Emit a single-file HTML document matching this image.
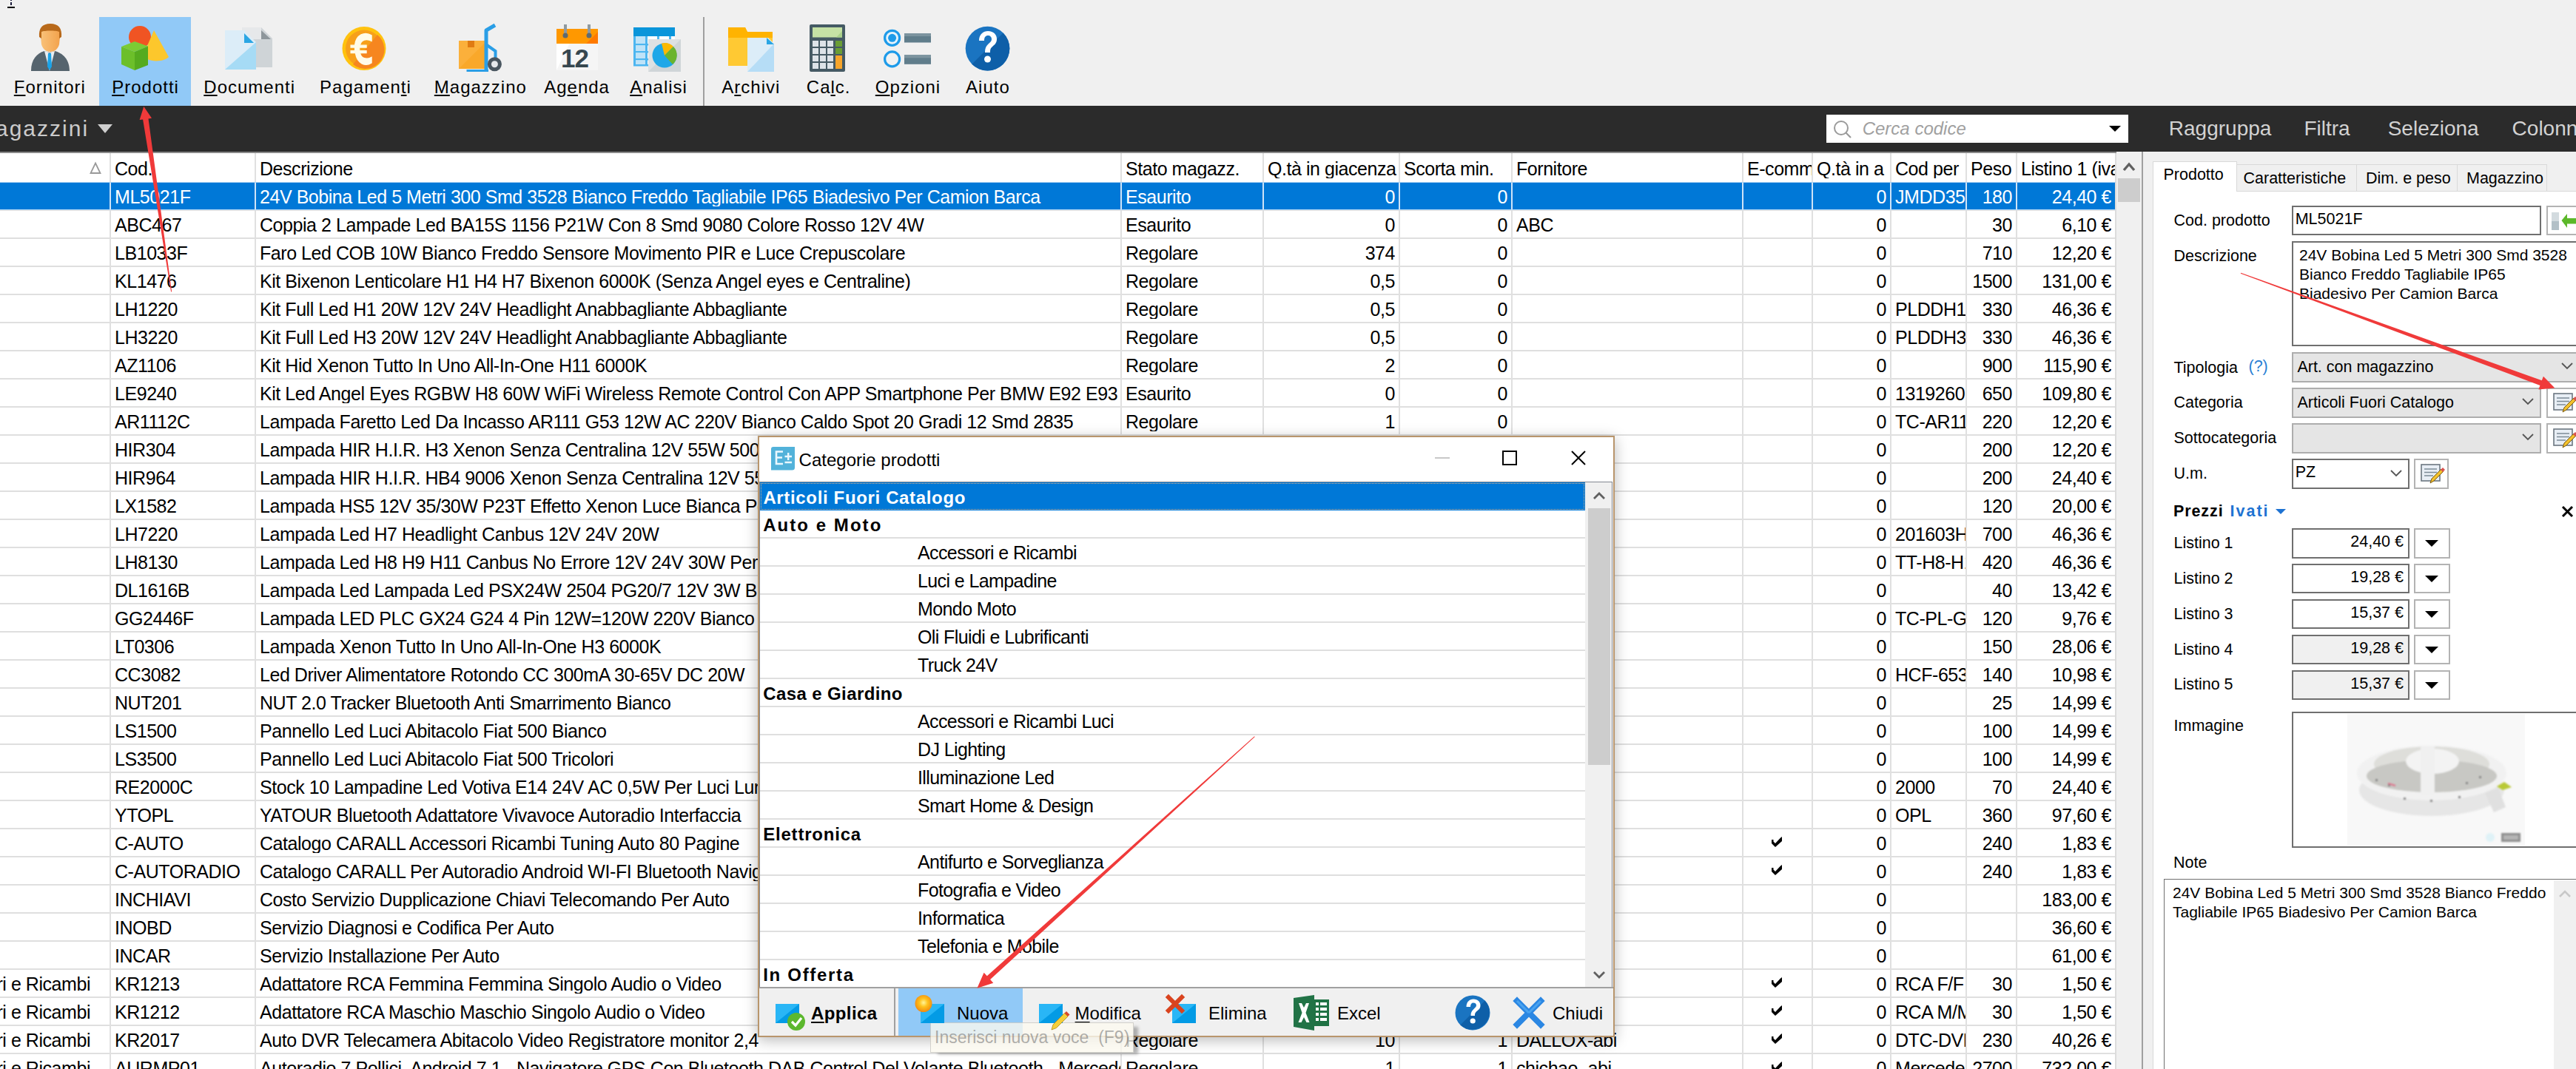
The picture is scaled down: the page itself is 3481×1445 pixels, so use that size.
<!DOCTYPE html><html><head><meta charset="utf-8"><title>Prodotti</title><style>
html,body{margin:0;padding:0;}
body{width:3481px;height:1445px;overflow:hidden;position:relative;background:#f0f0f0;font-family:"Liberation Sans",sans-serif;}
.t{position:absolute;white-space:pre;}
.r{position:absolute;}
svg{position:absolute;}
</style></head><body>
<div class="r" style="left:0px;top:0px;width:3481px;height:143px;background:#f0f0f0;"></div>
<div class="r" style="left:134px;top:23px;width:124px;height:120px;background:#91c9f7;"></div>
<div class="r" style="left:950px;top:23px;width:2px;height:120px;background:#a0a0a0;"></div>
<div class="t " style="left:18.8px;top:105.98px;font-size:24px;line-height:24px;color:#000;letter-spacing:1px;text-underline-offset:2px;text-decoration-thickness:2px;" ><u>F</u>ornitori</div>
<div class="t " style="left:151.20000000000002px;top:105.98px;font-size:24px;line-height:24px;color:#000;letter-spacing:1px;text-underline-offset:2px;text-decoration-thickness:2px;" ><u>P</u>rodotti</div>
<div class="t " style="left:275.3px;top:105.98px;font-size:24px;line-height:24px;color:#000;letter-spacing:1px;text-underline-offset:2px;text-decoration-thickness:2px;" ><u>D</u>ocumenti</div>
<div class="t " style="left:432.1px;top:105.98px;font-size:24px;line-height:24px;color:#000;letter-spacing:1px;text-underline-offset:2px;text-decoration-thickness:2px;" >Pagamen<u>t</u>i</div>
<div class="t " style="left:586.8px;top:105.98px;font-size:24px;line-height:24px;color:#000;letter-spacing:1px;text-underline-offset:2px;text-decoration-thickness:2px;" ><u>M</u>agazzino</div>
<div class="t " style="left:735.1999999999999px;top:105.98px;font-size:24px;line-height:24px;color:#000;letter-spacing:1px;text-underline-offset:2px;text-decoration-thickness:2px;" >Ag<u>e</u>nda</div>
<div class="t " style="left:851.1999999999999px;top:105.98px;font-size:24px;line-height:24px;color:#000;letter-spacing:1px;text-underline-offset:2px;text-decoration-thickness:2px;" ><u>A</u>nalisi</div>
<div class="t " style="left:975.3px;top:105.98px;font-size:24px;line-height:24px;color:#000;letter-spacing:1px;text-underline-offset:2px;text-decoration-thickness:2px;" >A<u>r</u>chivi</div>
<div class="t " style="left:1089.8px;top:105.98px;font-size:24px;line-height:24px;color:#000;letter-spacing:1px;text-underline-offset:2px;text-decoration-thickness:2px;" >Ca<u>l</u>c.</div>
<div class="t " style="left:1182.8px;top:105.98px;font-size:24px;line-height:24px;color:#000;letter-spacing:1px;text-underline-offset:2px;text-decoration-thickness:2px;" ><u>O</u>pzioni</div>
<div class="t " style="left:1305.1px;top:105.98px;font-size:24px;line-height:24px;color:#000;letter-spacing:1px;" >Aiuto</div>
<div class="r" style="left:13.7px;top:0px;width:2.4px;height:1.2px;background:#1a1a3a;"></div>
<div class="r" style="left:13.7px;top:2.5px;width:2.4px;height:4.5px;background:#1a1a3a;"></div>
<div class="r" style="left:10px;top:9px;width:10px;height:2px;background:#000;"></div>
<svg style="left:0;top:0" width="1400" height="143" viewBox="0 0 1400 143">
<defs>
<linearGradient id="face" x1="0" x2="1"><stop offset="0" stop-color="#f9c27a"/><stop offset="1" stop-color="#f3a24c"/></linearGradient>
<radialGradient id="sun" cx="0.45" cy="0.4" r="0.6"><stop offset="0" stop-color="#fff3a0"/><stop offset="0.5" stop-color="#ffc21a"/><stop offset="1" stop-color="#f38a12"/></radialGradient>
</defs>
<!-- Fornitori person -->
<path d="M42,96 C42,80 50,72 60,69 L67,71 L74,69 C85,72 94,80 94,96 Z" fill="#56646e"/>
<path d="M60,69 L67,96 L74,69 L70,70 L67,72 L64,70 Z" fill="#e9eef2"/>
<path d="M65,72 L69,72 L70,90 L67,95 L64,90 Z" fill="#1aa3e8"/>
<path d="M55,50 C55,38 59,33 68,33 C77,33 81,38 81,50 L80,60 C78,67 73,70 68,70 C63,70 58,67 56,60 Z" fill="url(#face)"/>
<path d="M53,50 C52,38 57,32 68,32 C79,32 84,38 83,50 L80,52 L80,43 C76,41 60,41 56,43 L56,52 Z" fill="#b8691a"/>
<!-- Prodotti -->
<circle cx="189" cy="50" r="15" fill="#f05423"/>
<path d="M208,41 L228,77 C222,83 208,84 199,80 L199,62 Z" fill="#fcc72c"/>
<path d="M164,63 L182,56 L200,62.5 L182,70 Z" fill="#7ccb34"/>
<path d="M164,63 L182,70 L182,95 L164,87 Z" fill="#6cbf2a"/>
<path d="M182,70 L200,62.5 L200,88 L182,95 Z" fill="#55ab1f"/>
<!-- Documenti -->
<path d="M327,37 L353,37 L368,52 L368,91 L327,91 Z" fill="#cfd4d7"/>
<path d="M327,37 L353,37 L353,53 L327,53 Z" fill="#e6e8ea"/>
<path d="M353,41 L366,53 L353,53 Z" fill="#8e969b"/>
<path d="M304,41 L330,41 L346,57 L346,94 L304,94 Z" fill="#dcedf8"/>
<path d="M346,57 L346,94 L304,94 Z" fill="#a6dbf5"/>
<path d="M330,45 L343,58 L330,58 Z" fill="#2aa6e4"/>
<!-- Pagamenti coin -->
<circle cx="492" cy="65.5" r="29.5" fill="#ffc20e"/>
<circle cx="492" cy="65.5" r="25" fill="#f7a01a"/>
<path d="M510,47 A25,25 0 0 1 477,87 Z" fill="#f6861f"/>
<g transform="matrix(0.78,0,0,0.95,105.1,4.15)"><path d="M509,46 C497,40 482,45 480,60 L473,60 L473,63 L480,63 L480,68 L473,68 L473,71 L481,71 C484,86 498,91 509,85 L509,77 C500,81 491,79 489,71 L500,71 L500,68 L488,68 L488,63 L500,63 L500,60 L489,60 C491,52 500,50 509,54 Z" fill="#fffbe8" stroke="#fffbe8" stroke-width="1.5"/></g>
<!-- Magazzino -->
<rect x="620" y="55" width="35" height="38" fill="#fbb03b"/>
<path d="M620,93 L655,58 L655,93 Z" fill="#f9a82a"/>
<rect x="632" y="55" width="9" height="9" fill="#e07b12"/>
<path d="M657,96 L657,41 L669,34" fill="none" stroke="#2a9ee6" stroke-width="5" stroke-linejoin="round"/>
<path d="M630.5,95.5 L660,95.5" stroke="#2a9ee6" stroke-width="3"/>
<path d="M658,61 L669.5,69 L669.5,79" fill="none" stroke="#2a9ee6" stroke-width="4"/>
<circle cx="668.4" cy="86.8" r="9.5" fill="#4a5660"/>
<circle cx="668.4" cy="86.8" r="4.5" fill="#e6e8ec"/>
<!-- Agenda -->
<path d="M752,58 L808,58 L808,95 L752,95 Z" fill="#f5f5f5"/>
<path d="M752,95 L770,58 L752,58 Z" fill="#ffffff"/>
<rect x="752" y="39" width="56" height="20" fill="#ff9800"/>
<path d="M792,59 L808,43 L808,59 Z" fill="#ff7a00"/>
<rect x="762" y="33" width="4" height="17" fill="#8f9aa0"/><rect x="794" y="33" width="4" height="17" fill="#8f9aa0"/>
<circle cx="764" cy="48" r="3.5" fill="#5f6a70"/><circle cx="796" cy="48" r="3.5" fill="#5f6a70"/>
<text x="758" y="91" font-family="Liberation Sans" font-weight="bold" font-size="35" fill="#37474f" letter-spacing="-1">12</text>
<!-- Analisi -->
<rect x="856" y="37" width="56" height="12" fill="#0a95da"/>
<rect x="856" y="49" width="56" height="40" fill="#ffffff"/>
<g fill="#4db6f0"><rect x="856" y="49" width="3" height="40"/><rect x="872" y="49" width="3" height="40"/><rect x="888" y="49" width="3" height="6"/><rect x="904" y="49" width="3" height="6"/>
<rect x="856" y="59" width="20" height="2.5"/><rect x="856" y="69" width="20" height="2.5"/><rect x="856" y="79" width="20" height="2.5"/><rect x="856" y="87" width="20" height="2.5"/></g>
<g fill="#bfe3f8"><rect x="859" y="49" width="13" height="10"/><rect x="859" y="61.5" width="13" height="7.5"/><rect x="859" y="71.5" width="13" height="7.5"/><rect x="859" y="81.5" width="13" height="5.5"/></g>
<rect x="876" y="53" width="44" height="44" fill="#dde1e3"/>
<path d="M876,97 L920,53 L920,97 Z" fill="#cfd5d8"/>
<circle cx="898" cy="75" r="16.5" fill="#1ea7e8"/>
<path d="M898,75 L894,58.8 A16.5,16.5 0 0 1 910,63 Z" fill="#fbb900"/>
<path d="M898,75 L910,63 A16.5,16.5 0 0 1 909,87 Z" fill="#6ab42e"/>
<!-- Archivi -->
<path d="M984,37 L1007,37 L1010,43 L1044,43 L1044,89 L984,89 Z" fill="#ffc933"/>
<path d="M984,37 L1007,37 L1010,43 L1044,43 L1044,51 L984,51 Z" fill="#ffb300"/>
<path d="M1010,51 L1038,51 L1046,59 L1046,97 L1010,97 Z" fill="#dcedf8"/>
<path d="M1046,59 L1046,97 L1010,97 Z" fill="#b6ddf6"/>
<path d="M1036,51 L1046,60 L1036,60 Z" fill="#2aa6e4"/>
<!-- Calc -->
<rect x="1094" y="33" width="48" height="64" rx="2" fill="#455a64"/>
<rect x="1098" y="37" width="40" height="13.5" fill="#c5e1a5"/>
<path d="M1130,50.5 L1138,42 L1138,50.5 Z" fill="#a9d08a"/>
<g fill="#dde3e8"><rect x="1098" y="55" width="8" height="8"/><rect x="1108" y="55" width="8" height="8"/><rect x="1118" y="55" width="8" height="8"/>
<rect x="1098" y="65" width="8" height="8"/><rect x="1108" y="65" width="8" height="8"/><rect x="1118" y="65" width="8" height="8"/>
<rect x="1098" y="75" width="8" height="8"/><rect x="1108" y="75" width="8" height="8"/><rect x="1118" y="75" width="8" height="8"/>
<rect x="1098" y="85" width="8" height="8"/><rect x="1108" y="85" width="8" height="8"/><rect x="1118" y="85" width="8" height="8"/></g>
<rect x="1129" y="55" width="9" height="8" fill="#6a9e35"/><rect x="1129" y="65" width="9" height="8" fill="#6a9e35"/><rect x="1129" y="75" width="9" height="18" fill="#f7a52b"/>
<!-- Opzioni -->
<circle cx="1205.6" cy="51.3" r="10" fill="#e6f3fb" stroke="#1e9be9" stroke-width="3.2"/>
<circle cx="1205.6" cy="51.3" r="5.5" fill="#1e9be9"/>
<circle cx="1205.6" cy="79.9" r="10" fill="#f2f2f2" stroke="#1e9be9" stroke-width="3.2"/>
<rect x="1222" y="45" width="36" height="12.5" fill="#607d8b"/><rect x="1222" y="74.3" width="36" height="12.5" fill="#607d8b"/>
<rect x="1222" y="45" width="36" height="4" fill="#7c949f"/><rect x="1222" y="74.3" width="36" height="4" fill="#7c949f"/>
<!-- Aiuto -->
<circle cx="1334.5" cy="65.6" r="29.8" fill="#1a74c1"/>
<path d="M1355.6,44.5 A29.8,29.8 0 0 1 1313.4,86.7 Z" fill="#0e5fa8"/>
<path d="M1323,55 C1323,46 1329,42 1335,42 C1343,42 1347,47 1347,53 C1347,59 1343,61 1340,64 C1338,66 1338,68 1338,71 L1331,71 C1331,66 1332,63 1335,60 C1338,57 1340,56 1340,53 C1340,50 1338,48 1335,48 C1332,48 1330,50 1330,55 Z" fill="#fff"/>
<circle cx="1334.5" cy="80" r="4.5" fill="#fff"/>
</svg>
<div class="r" style="left:0px;top:143px;width:3481px;height:62px;background:#2b2b2b;"></div>
<div class="t " style="left:-6px;top:159.41px;font-size:30px;line-height:30px;color:#cbcbcb;letter-spacing:2px;" >agazzini</div>
<svg style="left:130px;top:166px" width="24" height="16"><polygon points="2,2 22,2 12,14" fill="#cfcfcf"/></svg>
<div class="r" style="left:2468px;top:155px;width:408px;height:38px;background:#ffffff;"></div>
<svg style="left:2476px;top:160px" width="30" height="30"><circle cx="12" cy="13" r="9" fill="none" stroke="#9a9a9a" stroke-width="2"/><line x1="18.5" y1="19.5" x2="25" y2="26" stroke="#9a9a9a" stroke-width="2.2"/></svg>
<div class="t " style="left:2516.7px;top:162.18px;font-size:24px;line-height:24px;color:#a0a0a0;font-style:italic;" >Cerca codice</div>
<svg style="left:2848px;top:168px" width="20" height="12"><polygon points="2,2 18,2 10,10" fill="#000"/></svg>
<div class="t " style="left:2930.8px;top:160.00px;font-size:28px;line-height:28px;color:#d2d2d2;" >Raggruppa</div>
<div class="t " style="left:3113.4px;top:160.00px;font-size:28px;line-height:28px;color:#d2d2d2;" >Filtra</div>
<div class="t " style="left:3226.7px;top:160.00px;font-size:28px;line-height:28px;color:#d2d2d2;" >Seleziona</div>
<div class="t " style="left:3394.6px;top:160.00px;font-size:28px;line-height:28px;color:#d2d2d2;" >Colonne</div>
<div class="r" style="left:0px;top:205px;width:2895px;height:1240px;background:#ffffff;"></div>
<div class="t" style="left:155px;top:215.84px;width:189px;overflow:hidden;font-size:25px;line-height:25px;letter-spacing:-0.45px;">Cod.</div>
<div class="t" style="left:351px;top:215.84px;width:1163px;overflow:hidden;font-size:25px;line-height:25px;letter-spacing:-0.45px;">Descrizione</div>
<div class="t" style="left:1521px;top:215.84px;width:185px;overflow:hidden;font-size:25px;line-height:25px;letter-spacing:-0.45px;">Stato magazz.</div>
<div class="t" style="left:1713px;top:215.84px;width:177px;overflow:hidden;font-size:25px;line-height:25px;letter-spacing:-0.45px;">Q.tà in giacenza</div>
<div class="t" style="left:1897px;top:215.84px;width:145px;overflow:hidden;font-size:25px;line-height:25px;letter-spacing:-0.45px;">Scorta min.</div>
<div class="t" style="left:2049px;top:215.84px;width:305px;overflow:hidden;font-size:25px;line-height:25px;letter-spacing:-0.45px;">Fornitore</div>
<div class="t" style="left:2361px;top:215.84px;width:87px;overflow:hidden;font-size:25px;line-height:25px;letter-spacing:-0.45px;">E-comm</div>
<div class="t" style="left:2455px;top:215.84px;width:99px;overflow:hidden;font-size:25px;line-height:25px;letter-spacing:-0.45px;">Q.tà in a</div>
<div class="t" style="left:2561px;top:215.84px;width:95px;overflow:hidden;font-size:25px;line-height:25px;letter-spacing:-0.45px;">Cod per</div>
<div class="t" style="left:2663px;top:215.84px;width:61px;overflow:hidden;font-size:25px;line-height:25px;letter-spacing:-0.45px;">Peso</div>
<div class="t" style="left:2731px;top:215.84px;width:127px;overflow:hidden;font-size:25px;line-height:25px;letter-spacing:-0.45px;">Listino 1 (ivato)</div>
<svg style="left:120px;top:217px" width="18" height="20"><polygon points="9,3.5 15.5,17 2.5,17" fill="none" stroke="#999" stroke-width="1.8"/></svg>
<div class="r" style="left:0px;top:247px;width:2859px;height:36px;background:#0078d7;"></div>
<div class="t" style="left:155px;top:253.84px;width:189px;overflow:hidden;font-size:25px;line-height:25px;color:#fff;letter-spacing:-0.45px;">ML5021F</div>
<div class="t" style="left:351px;top:253.84px;width:1163px;overflow:hidden;font-size:25px;line-height:25px;color:#fff;letter-spacing:-0.45px;">24V Bobina Led 5 Metri 300 Smd 3528 Bianco Freddo Tagliabile IP65 Biadesivo Per Camion Barca</div>
<div class="t" style="left:1521px;top:253.84px;width:185px;overflow:hidden;font-size:25px;line-height:25px;color:#fff;letter-spacing:-0.45px;">Esaurito</div>
<div class="t" style="left:1708px;top:253.84px;width:177px;text-align:right;overflow:hidden;font-size:25px;line-height:25px;color:#fff;letter-spacing:-0.45px;">0</div>
<div class="t" style="left:1892px;top:253.84px;width:145px;text-align:right;overflow:hidden;font-size:25px;line-height:25px;color:#fff;letter-spacing:-0.45px;">0</div>
<div class="t" style="left:2450px;top:253.84px;width:99px;text-align:right;overflow:hidden;font-size:25px;line-height:25px;color:#fff;letter-spacing:-0.45px;">0</div>
<div class="t" style="left:2561px;top:253.84px;width:95px;overflow:hidden;font-size:25px;line-height:25px;color:#fff;letter-spacing:-0.45px;">JMDD3528</div>
<div class="t" style="left:2658px;top:253.84px;width:61px;text-align:right;overflow:hidden;font-size:25px;line-height:25px;color:#fff;letter-spacing:-0.45px;">180</div>
<div class="t" style="left:2726px;top:253.84px;width:127px;text-align:right;overflow:hidden;font-size:25px;line-height:25px;color:#fff;letter-spacing:-0.45px;">24,40 €</div>
<div class="r" style="left:0px;top:283px;width:2859px;height:2px;background:#dfdfdf;"></div>
<div class="t" style="left:155px;top:291.84px;width:189px;overflow:hidden;font-size:25px;line-height:25px;color:#000;letter-spacing:-0.45px;">ABC467</div>
<div class="t" style="left:351px;top:291.84px;width:1163px;overflow:hidden;font-size:25px;line-height:25px;color:#000;letter-spacing:-0.45px;">Coppia 2 Lampade Led BA15S 1156 P21W Con 8 Smd 9080 Colore Rosso 12V 4W</div>
<div class="t" style="left:1521px;top:291.84px;width:185px;overflow:hidden;font-size:25px;line-height:25px;color:#000;letter-spacing:-0.45px;">Esaurito</div>
<div class="t" style="left:1708px;top:291.84px;width:177px;text-align:right;overflow:hidden;font-size:25px;line-height:25px;color:#000;letter-spacing:-0.45px;">0</div>
<div class="t" style="left:1892px;top:291.84px;width:145px;text-align:right;overflow:hidden;font-size:25px;line-height:25px;color:#000;letter-spacing:-0.45px;">0</div>
<div class="t" style="left:2049px;top:291.84px;width:305px;overflow:hidden;font-size:25px;line-height:25px;color:#000;letter-spacing:-0.45px;">ABC</div>
<div class="t" style="left:2450px;top:291.84px;width:99px;text-align:right;overflow:hidden;font-size:25px;line-height:25px;color:#000;letter-spacing:-0.45px;">0</div>
<div class="t" style="left:2658px;top:291.84px;width:61px;text-align:right;overflow:hidden;font-size:25px;line-height:25px;color:#000;letter-spacing:-0.45px;">30</div>
<div class="t" style="left:2726px;top:291.84px;width:127px;text-align:right;overflow:hidden;font-size:25px;line-height:25px;color:#000;letter-spacing:-0.45px;">6,10 €</div>
<div class="r" style="left:0px;top:321px;width:2859px;height:2px;background:#dfdfdf;"></div>
<div class="t" style="left:155px;top:329.84px;width:189px;overflow:hidden;font-size:25px;line-height:25px;color:#000;letter-spacing:-0.45px;">LB1033F</div>
<div class="t" style="left:351px;top:329.84px;width:1163px;overflow:hidden;font-size:25px;line-height:25px;color:#000;letter-spacing:-0.45px;">Faro Led COB 10W Bianco Freddo Sensore Movimento PIR e Luce Crepuscolare</div>
<div class="t" style="left:1521px;top:329.84px;width:185px;overflow:hidden;font-size:25px;line-height:25px;color:#000;letter-spacing:-0.45px;">Regolare</div>
<div class="t" style="left:1708px;top:329.84px;width:177px;text-align:right;overflow:hidden;font-size:25px;line-height:25px;color:#000;letter-spacing:-0.45px;">374</div>
<div class="t" style="left:1892px;top:329.84px;width:145px;text-align:right;overflow:hidden;font-size:25px;line-height:25px;color:#000;letter-spacing:-0.45px;">0</div>
<div class="t" style="left:2450px;top:329.84px;width:99px;text-align:right;overflow:hidden;font-size:25px;line-height:25px;color:#000;letter-spacing:-0.45px;">0</div>
<div class="t" style="left:2658px;top:329.84px;width:61px;text-align:right;overflow:hidden;font-size:25px;line-height:25px;color:#000;letter-spacing:-0.45px;">710</div>
<div class="t" style="left:2726px;top:329.84px;width:127px;text-align:right;overflow:hidden;font-size:25px;line-height:25px;color:#000;letter-spacing:-0.45px;">12,20 €</div>
<div class="r" style="left:0px;top:359px;width:2859px;height:2px;background:#dfdfdf;"></div>
<div class="t" style="left:155px;top:367.84px;width:189px;overflow:hidden;font-size:25px;line-height:25px;color:#000;letter-spacing:-0.45px;">KL1476</div>
<div class="t" style="left:351px;top:367.84px;width:1163px;overflow:hidden;font-size:25px;line-height:25px;color:#000;letter-spacing:-0.45px;">Kit Bixenon Lenticolare H1 H4 H7 Bixenon 6000K (Senza Angel eyes e Centraline)</div>
<div class="t" style="left:1521px;top:367.84px;width:185px;overflow:hidden;font-size:25px;line-height:25px;color:#000;letter-spacing:-0.45px;">Regolare</div>
<div class="t" style="left:1708px;top:367.84px;width:177px;text-align:right;overflow:hidden;font-size:25px;line-height:25px;color:#000;letter-spacing:-0.45px;">0,5</div>
<div class="t" style="left:1892px;top:367.84px;width:145px;text-align:right;overflow:hidden;font-size:25px;line-height:25px;color:#000;letter-spacing:-0.45px;">0</div>
<div class="t" style="left:2450px;top:367.84px;width:99px;text-align:right;overflow:hidden;font-size:25px;line-height:25px;color:#000;letter-spacing:-0.45px;">0</div>
<div class="t" style="left:2658px;top:367.84px;width:61px;text-align:right;overflow:hidden;font-size:25px;line-height:25px;color:#000;letter-spacing:-0.45px;">1500</div>
<div class="t" style="left:2726px;top:367.84px;width:127px;text-align:right;overflow:hidden;font-size:25px;line-height:25px;color:#000;letter-spacing:-0.45px;">131,00 €</div>
<div class="r" style="left:0px;top:397px;width:2859px;height:2px;background:#dfdfdf;"></div>
<div class="t" style="left:155px;top:405.84px;width:189px;overflow:hidden;font-size:25px;line-height:25px;color:#000;letter-spacing:-0.45px;">LH1220</div>
<div class="t" style="left:351px;top:405.84px;width:1163px;overflow:hidden;font-size:25px;line-height:25px;color:#000;letter-spacing:-0.45px;">Kit Full Led H1 20W 12V 24V Headlight Anabbagliante Abbagliante</div>
<div class="t" style="left:1521px;top:405.84px;width:185px;overflow:hidden;font-size:25px;line-height:25px;color:#000;letter-spacing:-0.45px;">Regolare</div>
<div class="t" style="left:1708px;top:405.84px;width:177px;text-align:right;overflow:hidden;font-size:25px;line-height:25px;color:#000;letter-spacing:-0.45px;">0,5</div>
<div class="t" style="left:1892px;top:405.84px;width:145px;text-align:right;overflow:hidden;font-size:25px;line-height:25px;color:#000;letter-spacing:-0.45px;">0</div>
<div class="t" style="left:2450px;top:405.84px;width:99px;text-align:right;overflow:hidden;font-size:25px;line-height:25px;color:#000;letter-spacing:-0.45px;">0</div>
<div class="t" style="left:2561px;top:405.84px;width:95px;overflow:hidden;font-size:25px;line-height:25px;color:#000;letter-spacing:-0.45px;">PLDDH1</div>
<div class="t" style="left:2658px;top:405.84px;width:61px;text-align:right;overflow:hidden;font-size:25px;line-height:25px;color:#000;letter-spacing:-0.45px;">330</div>
<div class="t" style="left:2726px;top:405.84px;width:127px;text-align:right;overflow:hidden;font-size:25px;line-height:25px;color:#000;letter-spacing:-0.45px;">46,36 €</div>
<div class="r" style="left:0px;top:435px;width:2859px;height:2px;background:#dfdfdf;"></div>
<div class="t" style="left:155px;top:443.84px;width:189px;overflow:hidden;font-size:25px;line-height:25px;color:#000;letter-spacing:-0.45px;">LH3220</div>
<div class="t" style="left:351px;top:443.84px;width:1163px;overflow:hidden;font-size:25px;line-height:25px;color:#000;letter-spacing:-0.45px;">Kit Full Led H3 20W 12V 24V Headlight Anabbagliante Abbagliante</div>
<div class="t" style="left:1521px;top:443.84px;width:185px;overflow:hidden;font-size:25px;line-height:25px;color:#000;letter-spacing:-0.45px;">Regolare</div>
<div class="t" style="left:1708px;top:443.84px;width:177px;text-align:right;overflow:hidden;font-size:25px;line-height:25px;color:#000;letter-spacing:-0.45px;">0,5</div>
<div class="t" style="left:1892px;top:443.84px;width:145px;text-align:right;overflow:hidden;font-size:25px;line-height:25px;color:#000;letter-spacing:-0.45px;">0</div>
<div class="t" style="left:2450px;top:443.84px;width:99px;text-align:right;overflow:hidden;font-size:25px;line-height:25px;color:#000;letter-spacing:-0.45px;">0</div>
<div class="t" style="left:2561px;top:443.84px;width:95px;overflow:hidden;font-size:25px;line-height:25px;color:#000;letter-spacing:-0.45px;">PLDDH3</div>
<div class="t" style="left:2658px;top:443.84px;width:61px;text-align:right;overflow:hidden;font-size:25px;line-height:25px;color:#000;letter-spacing:-0.45px;">330</div>
<div class="t" style="left:2726px;top:443.84px;width:127px;text-align:right;overflow:hidden;font-size:25px;line-height:25px;color:#000;letter-spacing:-0.45px;">46,36 €</div>
<div class="r" style="left:0px;top:473px;width:2859px;height:2px;background:#dfdfdf;"></div>
<div class="t" style="left:155px;top:481.84px;width:189px;overflow:hidden;font-size:25px;line-height:25px;color:#000;letter-spacing:-0.45px;">AZ1106</div>
<div class="t" style="left:351px;top:481.84px;width:1163px;overflow:hidden;font-size:25px;line-height:25px;color:#000;letter-spacing:-0.45px;">Kit Hid Xenon Tutto In Uno All-In-One H11 6000K</div>
<div class="t" style="left:1521px;top:481.84px;width:185px;overflow:hidden;font-size:25px;line-height:25px;color:#000;letter-spacing:-0.45px;">Regolare</div>
<div class="t" style="left:1708px;top:481.84px;width:177px;text-align:right;overflow:hidden;font-size:25px;line-height:25px;color:#000;letter-spacing:-0.45px;">2</div>
<div class="t" style="left:1892px;top:481.84px;width:145px;text-align:right;overflow:hidden;font-size:25px;line-height:25px;color:#000;letter-spacing:-0.45px;">0</div>
<div class="t" style="left:2450px;top:481.84px;width:99px;text-align:right;overflow:hidden;font-size:25px;line-height:25px;color:#000;letter-spacing:-0.45px;">0</div>
<div class="t" style="left:2658px;top:481.84px;width:61px;text-align:right;overflow:hidden;font-size:25px;line-height:25px;color:#000;letter-spacing:-0.45px;">900</div>
<div class="t" style="left:2726px;top:481.84px;width:127px;text-align:right;overflow:hidden;font-size:25px;line-height:25px;color:#000;letter-spacing:-0.45px;">115,90 €</div>
<div class="r" style="left:0px;top:511px;width:2859px;height:2px;background:#dfdfdf;"></div>
<div class="t" style="left:155px;top:519.84px;width:189px;overflow:hidden;font-size:25px;line-height:25px;color:#000;letter-spacing:-0.45px;">LE9240</div>
<div class="t" style="left:351px;top:519.84px;width:1163px;overflow:hidden;font-size:25px;line-height:25px;color:#000;letter-spacing:-0.45px;">Kit Led Angel Eyes RGBW H8 60W WiFi Wireless Remote Control Con APP Smartphone Per BMW E92 E93</div>
<div class="t" style="left:1521px;top:519.84px;width:185px;overflow:hidden;font-size:25px;line-height:25px;color:#000;letter-spacing:-0.45px;">Esaurito</div>
<div class="t" style="left:1708px;top:519.84px;width:177px;text-align:right;overflow:hidden;font-size:25px;line-height:25px;color:#000;letter-spacing:-0.45px;">0</div>
<div class="t" style="left:1892px;top:519.84px;width:145px;text-align:right;overflow:hidden;font-size:25px;line-height:25px;color:#000;letter-spacing:-0.45px;">0</div>
<div class="t" style="left:2450px;top:519.84px;width:99px;text-align:right;overflow:hidden;font-size:25px;line-height:25px;color:#000;letter-spacing:-0.45px;">0</div>
<div class="t" style="left:2561px;top:519.84px;width:95px;overflow:hidden;font-size:25px;line-height:25px;color:#000;letter-spacing:-0.45px;">1319260</div>
<div class="t" style="left:2658px;top:519.84px;width:61px;text-align:right;overflow:hidden;font-size:25px;line-height:25px;color:#000;letter-spacing:-0.45px;">650</div>
<div class="t" style="left:2726px;top:519.84px;width:127px;text-align:right;overflow:hidden;font-size:25px;line-height:25px;color:#000;letter-spacing:-0.45px;">109,80 €</div>
<div class="r" style="left:0px;top:549px;width:2859px;height:2px;background:#dfdfdf;"></div>
<div class="t" style="left:155px;top:557.84px;width:189px;overflow:hidden;font-size:25px;line-height:25px;color:#000;letter-spacing:-0.45px;">AR1112C</div>
<div class="t" style="left:351px;top:557.84px;width:1163px;overflow:hidden;font-size:25px;line-height:25px;color:#000;letter-spacing:-0.45px;">Lampada Faretto Led Da Incasso AR111 G53 12W AC 220V Bianco Caldo Spot 20 Gradi 12 Smd 2835</div>
<div class="t" style="left:1521px;top:557.84px;width:185px;overflow:hidden;font-size:25px;line-height:25px;color:#000;letter-spacing:-0.45px;">Regolare</div>
<div class="t" style="left:1708px;top:557.84px;width:177px;text-align:right;overflow:hidden;font-size:25px;line-height:25px;color:#000;letter-spacing:-0.45px;">1</div>
<div class="t" style="left:1892px;top:557.84px;width:145px;text-align:right;overflow:hidden;font-size:25px;line-height:25px;color:#000;letter-spacing:-0.45px;">0</div>
<div class="t" style="left:2450px;top:557.84px;width:99px;text-align:right;overflow:hidden;font-size:25px;line-height:25px;color:#000;letter-spacing:-0.45px;">0</div>
<div class="t" style="left:2561px;top:557.84px;width:95px;overflow:hidden;font-size:25px;line-height:25px;color:#000;letter-spacing:-0.45px;">TC-AR111</div>
<div class="t" style="left:2658px;top:557.84px;width:61px;text-align:right;overflow:hidden;font-size:25px;line-height:25px;color:#000;letter-spacing:-0.45px;">220</div>
<div class="t" style="left:2726px;top:557.84px;width:127px;text-align:right;overflow:hidden;font-size:25px;line-height:25px;color:#000;letter-spacing:-0.45px;">12,20 €</div>
<div class="r" style="left:0px;top:587px;width:2859px;height:2px;background:#dfdfdf;"></div>
<div class="t" style="left:155px;top:595.84px;width:189px;overflow:hidden;font-size:25px;line-height:25px;color:#000;letter-spacing:-0.45px;">HIR304</div>
<div class="t" style="left:351px;top:595.84px;width:1163px;overflow:hidden;font-size:25px;line-height:25px;color:#000;letter-spacing:-0.45px;">Lampada HIR H.I.R. H3 Xenon Senza Centralina 12V 55W 5000K</div>
<div class="t" style="left:1521px;top:595.84px;width:185px;overflow:hidden;font-size:25px;line-height:25px;color:#000;letter-spacing:-0.45px;">Regolare</div>
<div class="t" style="left:1708px;top:595.84px;width:177px;text-align:right;overflow:hidden;font-size:25px;line-height:25px;color:#000;letter-spacing:-0.45px;">0</div>
<div class="t" style="left:1892px;top:595.84px;width:145px;text-align:right;overflow:hidden;font-size:25px;line-height:25px;color:#000;letter-spacing:-0.45px;">0</div>
<div class="t" style="left:2450px;top:595.84px;width:99px;text-align:right;overflow:hidden;font-size:25px;line-height:25px;color:#000;letter-spacing:-0.45px;">0</div>
<div class="t" style="left:2658px;top:595.84px;width:61px;text-align:right;overflow:hidden;font-size:25px;line-height:25px;color:#000;letter-spacing:-0.45px;">200</div>
<div class="t" style="left:2726px;top:595.84px;width:127px;text-align:right;overflow:hidden;font-size:25px;line-height:25px;color:#000;letter-spacing:-0.45px;">12,20 €</div>
<div class="r" style="left:0px;top:625px;width:2859px;height:2px;background:#dfdfdf;"></div>
<div class="t" style="left:155px;top:633.84px;width:189px;overflow:hidden;font-size:25px;line-height:25px;color:#000;letter-spacing:-0.45px;">HIR964</div>
<div class="t" style="left:351px;top:633.84px;width:1163px;overflow:hidden;font-size:25px;line-height:25px;color:#000;letter-spacing:-0.45px;">Lampada HIR H.I.R. HB4 9006 Xenon Senza Centralina 12V 55W</div>
<div class="t" style="left:1521px;top:633.84px;width:185px;overflow:hidden;font-size:25px;line-height:25px;color:#000;letter-spacing:-0.45px;">Regolare</div>
<div class="t" style="left:1708px;top:633.84px;width:177px;text-align:right;overflow:hidden;font-size:25px;line-height:25px;color:#000;letter-spacing:-0.45px;">0</div>
<div class="t" style="left:1892px;top:633.84px;width:145px;text-align:right;overflow:hidden;font-size:25px;line-height:25px;color:#000;letter-spacing:-0.45px;">0</div>
<div class="t" style="left:2450px;top:633.84px;width:99px;text-align:right;overflow:hidden;font-size:25px;line-height:25px;color:#000;letter-spacing:-0.45px;">0</div>
<div class="t" style="left:2658px;top:633.84px;width:61px;text-align:right;overflow:hidden;font-size:25px;line-height:25px;color:#000;letter-spacing:-0.45px;">200</div>
<div class="t" style="left:2726px;top:633.84px;width:127px;text-align:right;overflow:hidden;font-size:25px;line-height:25px;color:#000;letter-spacing:-0.45px;">24,40 €</div>
<div class="r" style="left:0px;top:663px;width:2859px;height:2px;background:#dfdfdf;"></div>
<div class="t" style="left:155px;top:671.84px;width:189px;overflow:hidden;font-size:25px;line-height:25px;color:#000;letter-spacing:-0.45px;">LX1582</div>
<div class="t" style="left:351px;top:671.84px;width:1163px;overflow:hidden;font-size:25px;line-height:25px;color:#000;letter-spacing:-0.45px;">Lampada HS5 12V 35/30W P23T Effetto Xenon Luce Bianca Per Moto</div>
<div class="t" style="left:1521px;top:671.84px;width:185px;overflow:hidden;font-size:25px;line-height:25px;color:#000;letter-spacing:-0.45px;">Regolare</div>
<div class="t" style="left:1708px;top:671.84px;width:177px;text-align:right;overflow:hidden;font-size:25px;line-height:25px;color:#000;letter-spacing:-0.45px;">0</div>
<div class="t" style="left:1892px;top:671.84px;width:145px;text-align:right;overflow:hidden;font-size:25px;line-height:25px;color:#000;letter-spacing:-0.45px;">0</div>
<div class="t" style="left:2450px;top:671.84px;width:99px;text-align:right;overflow:hidden;font-size:25px;line-height:25px;color:#000;letter-spacing:-0.45px;">0</div>
<div class="t" style="left:2658px;top:671.84px;width:61px;text-align:right;overflow:hidden;font-size:25px;line-height:25px;color:#000;letter-spacing:-0.45px;">120</div>
<div class="t" style="left:2726px;top:671.84px;width:127px;text-align:right;overflow:hidden;font-size:25px;line-height:25px;color:#000;letter-spacing:-0.45px;">20,00 €</div>
<div class="r" style="left:0px;top:701px;width:2859px;height:2px;background:#dfdfdf;"></div>
<div class="t" style="left:155px;top:709.84px;width:189px;overflow:hidden;font-size:25px;line-height:25px;color:#000;letter-spacing:-0.45px;">LH7220</div>
<div class="t" style="left:351px;top:709.84px;width:1163px;overflow:hidden;font-size:25px;line-height:25px;color:#000;letter-spacing:-0.45px;">Lampada Led H7 Headlight Canbus 12V 24V 20W</div>
<div class="t" style="left:1521px;top:709.84px;width:185px;overflow:hidden;font-size:25px;line-height:25px;color:#000;letter-spacing:-0.45px;">Regolare</div>
<div class="t" style="left:1708px;top:709.84px;width:177px;text-align:right;overflow:hidden;font-size:25px;line-height:25px;color:#000;letter-spacing:-0.45px;">0</div>
<div class="t" style="left:1892px;top:709.84px;width:145px;text-align:right;overflow:hidden;font-size:25px;line-height:25px;color:#000;letter-spacing:-0.45px;">0</div>
<div class="t" style="left:2450px;top:709.84px;width:99px;text-align:right;overflow:hidden;font-size:25px;line-height:25px;color:#000;letter-spacing:-0.45px;">0</div>
<div class="t" style="left:2561px;top:709.84px;width:95px;overflow:hidden;font-size:25px;line-height:25px;color:#000;letter-spacing:-0.45px;">201603H7</div>
<div class="t" style="left:2658px;top:709.84px;width:61px;text-align:right;overflow:hidden;font-size:25px;line-height:25px;color:#000;letter-spacing:-0.45px;">700</div>
<div class="t" style="left:2726px;top:709.84px;width:127px;text-align:right;overflow:hidden;font-size:25px;line-height:25px;color:#000;letter-spacing:-0.45px;">46,36 €</div>
<div class="r" style="left:0px;top:739px;width:2859px;height:2px;background:#dfdfdf;"></div>
<div class="t" style="left:155px;top:747.84px;width:189px;overflow:hidden;font-size:25px;line-height:25px;color:#000;letter-spacing:-0.45px;">LH8130</div>
<div class="t" style="left:351px;top:747.84px;width:1163px;overflow:hidden;font-size:25px;line-height:25px;color:#000;letter-spacing:-0.45px;">Lampada Led H8 H9 H11 Canbus No Errore 12V 24V 30W Per Fendinebbia</div>
<div class="t" style="left:1521px;top:747.84px;width:185px;overflow:hidden;font-size:25px;line-height:25px;color:#000;letter-spacing:-0.45px;">Regolare</div>
<div class="t" style="left:1708px;top:747.84px;width:177px;text-align:right;overflow:hidden;font-size:25px;line-height:25px;color:#000;letter-spacing:-0.45px;">0</div>
<div class="t" style="left:1892px;top:747.84px;width:145px;text-align:right;overflow:hidden;font-size:25px;line-height:25px;color:#000;letter-spacing:-0.45px;">0</div>
<div class="t" style="left:2450px;top:747.84px;width:99px;text-align:right;overflow:hidden;font-size:25px;line-height:25px;color:#000;letter-spacing:-0.45px;">0</div>
<div class="t" style="left:2561px;top:747.84px;width:95px;overflow:hidden;font-size:25px;line-height:25px;color:#000;letter-spacing:-0.45px;">TT-H8-H11</div>
<div class="t" style="left:2658px;top:747.84px;width:61px;text-align:right;overflow:hidden;font-size:25px;line-height:25px;color:#000;letter-spacing:-0.45px;">420</div>
<div class="t" style="left:2726px;top:747.84px;width:127px;text-align:right;overflow:hidden;font-size:25px;line-height:25px;color:#000;letter-spacing:-0.45px;">46,36 €</div>
<div class="r" style="left:0px;top:777px;width:2859px;height:2px;background:#dfdfdf;"></div>
<div class="t" style="left:155px;top:785.84px;width:189px;overflow:hidden;font-size:25px;line-height:25px;color:#000;letter-spacing:-0.45px;">DL1616B</div>
<div class="t" style="left:351px;top:785.84px;width:1163px;overflow:hidden;font-size:25px;line-height:25px;color:#000;letter-spacing:-0.45px;">Lampada Led Lampada Led PSX24W 2504 PG20/7 12V 3W Bianco</div>
<div class="t" style="left:1521px;top:785.84px;width:185px;overflow:hidden;font-size:25px;line-height:25px;color:#000;letter-spacing:-0.45px;">Regolare</div>
<div class="t" style="left:1708px;top:785.84px;width:177px;text-align:right;overflow:hidden;font-size:25px;line-height:25px;color:#000;letter-spacing:-0.45px;">0</div>
<div class="t" style="left:1892px;top:785.84px;width:145px;text-align:right;overflow:hidden;font-size:25px;line-height:25px;color:#000;letter-spacing:-0.45px;">0</div>
<div class="t" style="left:2450px;top:785.84px;width:99px;text-align:right;overflow:hidden;font-size:25px;line-height:25px;color:#000;letter-spacing:-0.45px;">0</div>
<div class="t" style="left:2658px;top:785.84px;width:61px;text-align:right;overflow:hidden;font-size:25px;line-height:25px;color:#000;letter-spacing:-0.45px;">40</div>
<div class="t" style="left:2726px;top:785.84px;width:127px;text-align:right;overflow:hidden;font-size:25px;line-height:25px;color:#000;letter-spacing:-0.45px;">13,42 €</div>
<div class="r" style="left:0px;top:815px;width:2859px;height:2px;background:#dfdfdf;"></div>
<div class="t" style="left:155px;top:823.84px;width:189px;overflow:hidden;font-size:25px;line-height:25px;color:#000;letter-spacing:-0.45px;">GG2446F</div>
<div class="t" style="left:351px;top:823.84px;width:1163px;overflow:hidden;font-size:25px;line-height:25px;color:#000;letter-spacing:-0.45px;">Lampada LED PLC GX24 G24 4 Pin 12W=120W 220V Bianco Freddo</div>
<div class="t" style="left:1521px;top:823.84px;width:185px;overflow:hidden;font-size:25px;line-height:25px;color:#000;letter-spacing:-0.45px;">Regolare</div>
<div class="t" style="left:1708px;top:823.84px;width:177px;text-align:right;overflow:hidden;font-size:25px;line-height:25px;color:#000;letter-spacing:-0.45px;">0</div>
<div class="t" style="left:1892px;top:823.84px;width:145px;text-align:right;overflow:hidden;font-size:25px;line-height:25px;color:#000;letter-spacing:-0.45px;">0</div>
<div class="t" style="left:2450px;top:823.84px;width:99px;text-align:right;overflow:hidden;font-size:25px;line-height:25px;color:#000;letter-spacing:-0.45px;">0</div>
<div class="t" style="left:2561px;top:823.84px;width:95px;overflow:hidden;font-size:25px;line-height:25px;color:#000;letter-spacing:-0.45px;">TC-PL-G24</div>
<div class="t" style="left:2658px;top:823.84px;width:61px;text-align:right;overflow:hidden;font-size:25px;line-height:25px;color:#000;letter-spacing:-0.45px;">120</div>
<div class="t" style="left:2726px;top:823.84px;width:127px;text-align:right;overflow:hidden;font-size:25px;line-height:25px;color:#000;letter-spacing:-0.45px;">9,76 €</div>
<div class="r" style="left:0px;top:853px;width:2859px;height:2px;background:#dfdfdf;"></div>
<div class="t" style="left:155px;top:861.84px;width:189px;overflow:hidden;font-size:25px;line-height:25px;color:#000;letter-spacing:-0.45px;">LT0306</div>
<div class="t" style="left:351px;top:861.84px;width:1163px;overflow:hidden;font-size:25px;line-height:25px;color:#000;letter-spacing:-0.45px;">Lampada Xenon Tutto In Uno All-In-One H3 6000K</div>
<div class="t" style="left:1521px;top:861.84px;width:185px;overflow:hidden;font-size:25px;line-height:25px;color:#000;letter-spacing:-0.45px;">Regolare</div>
<div class="t" style="left:1708px;top:861.84px;width:177px;text-align:right;overflow:hidden;font-size:25px;line-height:25px;color:#000;letter-spacing:-0.45px;">0</div>
<div class="t" style="left:1892px;top:861.84px;width:145px;text-align:right;overflow:hidden;font-size:25px;line-height:25px;color:#000;letter-spacing:-0.45px;">0</div>
<div class="t" style="left:2450px;top:861.84px;width:99px;text-align:right;overflow:hidden;font-size:25px;line-height:25px;color:#000;letter-spacing:-0.45px;">0</div>
<div class="t" style="left:2658px;top:861.84px;width:61px;text-align:right;overflow:hidden;font-size:25px;line-height:25px;color:#000;letter-spacing:-0.45px;">150</div>
<div class="t" style="left:2726px;top:861.84px;width:127px;text-align:right;overflow:hidden;font-size:25px;line-height:25px;color:#000;letter-spacing:-0.45px;">28,06 €</div>
<div class="r" style="left:0px;top:891px;width:2859px;height:2px;background:#dfdfdf;"></div>
<div class="t" style="left:155px;top:899.84px;width:189px;overflow:hidden;font-size:25px;line-height:25px;color:#000;letter-spacing:-0.45px;">CC3082</div>
<div class="t" style="left:351px;top:899.84px;width:1163px;overflow:hidden;font-size:25px;line-height:25px;color:#000;letter-spacing:-0.45px;">Led Driver Alimentatore Rotondo CC 300mA 30-65V DC 20W</div>
<div class="t" style="left:1521px;top:899.84px;width:185px;overflow:hidden;font-size:25px;line-height:25px;color:#000;letter-spacing:-0.45px;">Regolare</div>
<div class="t" style="left:1708px;top:899.84px;width:177px;text-align:right;overflow:hidden;font-size:25px;line-height:25px;color:#000;letter-spacing:-0.45px;">0</div>
<div class="t" style="left:1892px;top:899.84px;width:145px;text-align:right;overflow:hidden;font-size:25px;line-height:25px;color:#000;letter-spacing:-0.45px;">0</div>
<div class="t" style="left:2450px;top:899.84px;width:99px;text-align:right;overflow:hidden;font-size:25px;line-height:25px;color:#000;letter-spacing:-0.45px;">0</div>
<div class="t" style="left:2561px;top:899.84px;width:95px;overflow:hidden;font-size:25px;line-height:25px;color:#000;letter-spacing:-0.45px;">HCF-653</div>
<div class="t" style="left:2658px;top:899.84px;width:61px;text-align:right;overflow:hidden;font-size:25px;line-height:25px;color:#000;letter-spacing:-0.45px;">140</div>
<div class="t" style="left:2726px;top:899.84px;width:127px;text-align:right;overflow:hidden;font-size:25px;line-height:25px;color:#000;letter-spacing:-0.45px;">10,98 €</div>
<div class="r" style="left:0px;top:929px;width:2859px;height:2px;background:#dfdfdf;"></div>
<div class="t" style="left:155px;top:937.84px;width:189px;overflow:hidden;font-size:25px;line-height:25px;color:#000;letter-spacing:-0.45px;">NUT201</div>
<div class="t" style="left:351px;top:937.84px;width:1163px;overflow:hidden;font-size:25px;line-height:25px;color:#000;letter-spacing:-0.45px;">NUT 2.0 Tracker Bluetooth Anti Smarrimento Bianco</div>
<div class="t" style="left:1521px;top:937.84px;width:185px;overflow:hidden;font-size:25px;line-height:25px;color:#000;letter-spacing:-0.45px;">Regolare</div>
<div class="t" style="left:1708px;top:937.84px;width:177px;text-align:right;overflow:hidden;font-size:25px;line-height:25px;color:#000;letter-spacing:-0.45px;">0</div>
<div class="t" style="left:1892px;top:937.84px;width:145px;text-align:right;overflow:hidden;font-size:25px;line-height:25px;color:#000;letter-spacing:-0.45px;">0</div>
<div class="t" style="left:2450px;top:937.84px;width:99px;text-align:right;overflow:hidden;font-size:25px;line-height:25px;color:#000;letter-spacing:-0.45px;">0</div>
<div class="t" style="left:2658px;top:937.84px;width:61px;text-align:right;overflow:hidden;font-size:25px;line-height:25px;color:#000;letter-spacing:-0.45px;">25</div>
<div class="t" style="left:2726px;top:937.84px;width:127px;text-align:right;overflow:hidden;font-size:25px;line-height:25px;color:#000;letter-spacing:-0.45px;">14,99 €</div>
<div class="r" style="left:0px;top:967px;width:2859px;height:2px;background:#dfdfdf;"></div>
<div class="t" style="left:155px;top:975.84px;width:189px;overflow:hidden;font-size:25px;line-height:25px;color:#000;letter-spacing:-0.45px;">LS1500</div>
<div class="t" style="left:351px;top:975.84px;width:1163px;overflow:hidden;font-size:25px;line-height:25px;color:#000;letter-spacing:-0.45px;">Pannello Led Luci Abitacolo Fiat 500 Bianco</div>
<div class="t" style="left:1521px;top:975.84px;width:185px;overflow:hidden;font-size:25px;line-height:25px;color:#000;letter-spacing:-0.45px;">Regolare</div>
<div class="t" style="left:1708px;top:975.84px;width:177px;text-align:right;overflow:hidden;font-size:25px;line-height:25px;color:#000;letter-spacing:-0.45px;">0</div>
<div class="t" style="left:1892px;top:975.84px;width:145px;text-align:right;overflow:hidden;font-size:25px;line-height:25px;color:#000;letter-spacing:-0.45px;">0</div>
<div class="t" style="left:2450px;top:975.84px;width:99px;text-align:right;overflow:hidden;font-size:25px;line-height:25px;color:#000;letter-spacing:-0.45px;">0</div>
<div class="t" style="left:2658px;top:975.84px;width:61px;text-align:right;overflow:hidden;font-size:25px;line-height:25px;color:#000;letter-spacing:-0.45px;">100</div>
<div class="t" style="left:2726px;top:975.84px;width:127px;text-align:right;overflow:hidden;font-size:25px;line-height:25px;color:#000;letter-spacing:-0.45px;">14,99 €</div>
<div class="r" style="left:0px;top:1005px;width:2859px;height:2px;background:#dfdfdf;"></div>
<div class="t" style="left:155px;top:1013.84px;width:189px;overflow:hidden;font-size:25px;line-height:25px;color:#000;letter-spacing:-0.45px;">LS3500</div>
<div class="t" style="left:351px;top:1013.84px;width:1163px;overflow:hidden;font-size:25px;line-height:25px;color:#000;letter-spacing:-0.45px;">Pannello Led Luci Abitacolo Fiat 500 Tricolori</div>
<div class="t" style="left:1521px;top:1013.84px;width:185px;overflow:hidden;font-size:25px;line-height:25px;color:#000;letter-spacing:-0.45px;">Regolare</div>
<div class="t" style="left:1708px;top:1013.84px;width:177px;text-align:right;overflow:hidden;font-size:25px;line-height:25px;color:#000;letter-spacing:-0.45px;">0</div>
<div class="t" style="left:1892px;top:1013.84px;width:145px;text-align:right;overflow:hidden;font-size:25px;line-height:25px;color:#000;letter-spacing:-0.45px;">0</div>
<div class="t" style="left:2450px;top:1013.84px;width:99px;text-align:right;overflow:hidden;font-size:25px;line-height:25px;color:#000;letter-spacing:-0.45px;">0</div>
<div class="t" style="left:2658px;top:1013.84px;width:61px;text-align:right;overflow:hidden;font-size:25px;line-height:25px;color:#000;letter-spacing:-0.45px;">100</div>
<div class="t" style="left:2726px;top:1013.84px;width:127px;text-align:right;overflow:hidden;font-size:25px;line-height:25px;color:#000;letter-spacing:-0.45px;">14,99 €</div>
<div class="r" style="left:0px;top:1043px;width:2859px;height:2px;background:#dfdfdf;"></div>
<div class="t" style="left:155px;top:1051.84px;width:189px;overflow:hidden;font-size:25px;line-height:25px;color:#000;letter-spacing:-0.45px;">RE2000C</div>
<div class="t" style="left:351px;top:1051.84px;width:1163px;overflow:hidden;font-size:25px;line-height:25px;color:#000;letter-spacing:-0.45px;">Stock 10 Lampadine Led Votiva E14 24V AC 0,5W Per Luci Lumini</div>
<div class="t" style="left:1521px;top:1051.84px;width:185px;overflow:hidden;font-size:25px;line-height:25px;color:#000;letter-spacing:-0.45px;">Regolare</div>
<div class="t" style="left:1708px;top:1051.84px;width:177px;text-align:right;overflow:hidden;font-size:25px;line-height:25px;color:#000;letter-spacing:-0.45px;">0</div>
<div class="t" style="left:1892px;top:1051.84px;width:145px;text-align:right;overflow:hidden;font-size:25px;line-height:25px;color:#000;letter-spacing:-0.45px;">0</div>
<div class="t" style="left:2450px;top:1051.84px;width:99px;text-align:right;overflow:hidden;font-size:25px;line-height:25px;color:#000;letter-spacing:-0.45px;">0</div>
<div class="t" style="left:2561px;top:1051.84px;width:95px;overflow:hidden;font-size:25px;line-height:25px;color:#000;letter-spacing:-0.45px;">2000</div>
<div class="t" style="left:2658px;top:1051.84px;width:61px;text-align:right;overflow:hidden;font-size:25px;line-height:25px;color:#000;letter-spacing:-0.45px;">70</div>
<div class="t" style="left:2726px;top:1051.84px;width:127px;text-align:right;overflow:hidden;font-size:25px;line-height:25px;color:#000;letter-spacing:-0.45px;">24,40 €</div>
<div class="r" style="left:0px;top:1081px;width:2859px;height:2px;background:#dfdfdf;"></div>
<div class="t" style="left:155px;top:1089.84px;width:189px;overflow:hidden;font-size:25px;line-height:25px;color:#000;letter-spacing:-0.45px;">YTOPL</div>
<div class="t" style="left:351px;top:1089.84px;width:1163px;overflow:hidden;font-size:25px;line-height:25px;color:#000;letter-spacing:-0.45px;">YATOUR Bluetooth Adattatore Vivavoce Autoradio Interfaccia</div>
<div class="t" style="left:1521px;top:1089.84px;width:185px;overflow:hidden;font-size:25px;line-height:25px;color:#000;letter-spacing:-0.45px;">Regolare</div>
<div class="t" style="left:1708px;top:1089.84px;width:177px;text-align:right;overflow:hidden;font-size:25px;line-height:25px;color:#000;letter-spacing:-0.45px;">0</div>
<div class="t" style="left:1892px;top:1089.84px;width:145px;text-align:right;overflow:hidden;font-size:25px;line-height:25px;color:#000;letter-spacing:-0.45px;">0</div>
<div class="t" style="left:2450px;top:1089.84px;width:99px;text-align:right;overflow:hidden;font-size:25px;line-height:25px;color:#000;letter-spacing:-0.45px;">0</div>
<div class="t" style="left:2561px;top:1089.84px;width:95px;overflow:hidden;font-size:25px;line-height:25px;color:#000;letter-spacing:-0.45px;">OPL</div>
<div class="t" style="left:2658px;top:1089.84px;width:61px;text-align:right;overflow:hidden;font-size:25px;line-height:25px;color:#000;letter-spacing:-0.45px;">360</div>
<div class="t" style="left:2726px;top:1089.84px;width:127px;text-align:right;overflow:hidden;font-size:25px;line-height:25px;color:#000;letter-spacing:-0.45px;">97,60 €</div>
<div class="r" style="left:0px;top:1119px;width:2859px;height:2px;background:#dfdfdf;"></div>
<div class="t" style="left:155px;top:1127.84px;width:189px;overflow:hidden;font-size:25px;line-height:25px;color:#000;letter-spacing:-0.45px;">C-AUTO</div>
<div class="t" style="left:351px;top:1127.84px;width:1163px;overflow:hidden;font-size:25px;line-height:25px;color:#000;letter-spacing:-0.45px;">Catalogo CARALL Accessori Ricambi Tuning Auto 80 Pagine</div>
<div class="t" style="left:1521px;top:1127.84px;width:185px;overflow:hidden;font-size:25px;line-height:25px;color:#000;letter-spacing:-0.45px;">Regolare</div>
<div class="t" style="left:1708px;top:1127.84px;width:177px;text-align:right;overflow:hidden;font-size:25px;line-height:25px;color:#000;letter-spacing:-0.45px;">0</div>
<div class="t" style="left:1892px;top:1127.84px;width:145px;text-align:right;overflow:hidden;font-size:25px;line-height:25px;color:#000;letter-spacing:-0.45px;">0</div>
<svg style="left:2392px;top:1129px" width="18" height="18"><polygon points="2,6 4.5,6 4.5,8.5 7,11 14,3.5 16,2 16,8 7,16 2,11" fill="#000"/></svg>
<div class="t" style="left:2450px;top:1127.84px;width:99px;text-align:right;overflow:hidden;font-size:25px;line-height:25px;color:#000;letter-spacing:-0.45px;">0</div>
<div class="t" style="left:2658px;top:1127.84px;width:61px;text-align:right;overflow:hidden;font-size:25px;line-height:25px;color:#000;letter-spacing:-0.45px;">240</div>
<div class="t" style="left:2726px;top:1127.84px;width:127px;text-align:right;overflow:hidden;font-size:25px;line-height:25px;color:#000;letter-spacing:-0.45px;">1,83 €</div>
<div class="r" style="left:0px;top:1157px;width:2859px;height:2px;background:#dfdfdf;"></div>
<div class="t" style="left:155px;top:1165.84px;width:189px;overflow:hidden;font-size:25px;line-height:25px;color:#000;letter-spacing:-0.45px;">C-AUTORADIO</div>
<div class="t" style="left:351px;top:1165.84px;width:1163px;overflow:hidden;font-size:25px;line-height:25px;color:#000;letter-spacing:-0.45px;">Catalogo CARALL Per Autoradio Android WI-FI Bluetooth Navigatore</div>
<div class="t" style="left:1521px;top:1165.84px;width:185px;overflow:hidden;font-size:25px;line-height:25px;color:#000;letter-spacing:-0.45px;">Regolare</div>
<div class="t" style="left:1708px;top:1165.84px;width:177px;text-align:right;overflow:hidden;font-size:25px;line-height:25px;color:#000;letter-spacing:-0.45px;">0</div>
<div class="t" style="left:1892px;top:1165.84px;width:145px;text-align:right;overflow:hidden;font-size:25px;line-height:25px;color:#000;letter-spacing:-0.45px;">0</div>
<svg style="left:2392px;top:1167px" width="18" height="18"><polygon points="2,6 4.5,6 4.5,8.5 7,11 14,3.5 16,2 16,8 7,16 2,11" fill="#000"/></svg>
<div class="t" style="left:2450px;top:1165.84px;width:99px;text-align:right;overflow:hidden;font-size:25px;line-height:25px;color:#000;letter-spacing:-0.45px;">0</div>
<div class="t" style="left:2658px;top:1165.84px;width:61px;text-align:right;overflow:hidden;font-size:25px;line-height:25px;color:#000;letter-spacing:-0.45px;">240</div>
<div class="t" style="left:2726px;top:1165.84px;width:127px;text-align:right;overflow:hidden;font-size:25px;line-height:25px;color:#000;letter-spacing:-0.45px;">1,83 €</div>
<div class="r" style="left:0px;top:1195px;width:2859px;height:2px;background:#dfdfdf;"></div>
<div class="t" style="left:155px;top:1203.84px;width:189px;overflow:hidden;font-size:25px;line-height:25px;color:#000;letter-spacing:-0.45px;">INCHIAVI</div>
<div class="t" style="left:351px;top:1203.84px;width:1163px;overflow:hidden;font-size:25px;line-height:25px;color:#000;letter-spacing:-0.45px;">Costo Servizio Dupplicazione Chiavi Telecomando Per Auto</div>
<div class="t" style="left:1521px;top:1203.84px;width:185px;overflow:hidden;font-size:25px;line-height:25px;color:#000;letter-spacing:-0.45px;">Regolare</div>
<div class="t" style="left:1708px;top:1203.84px;width:177px;text-align:right;overflow:hidden;font-size:25px;line-height:25px;color:#000;letter-spacing:-0.45px;">0</div>
<div class="t" style="left:1892px;top:1203.84px;width:145px;text-align:right;overflow:hidden;font-size:25px;line-height:25px;color:#000;letter-spacing:-0.45px;">0</div>
<div class="t" style="left:2450px;top:1203.84px;width:99px;text-align:right;overflow:hidden;font-size:25px;line-height:25px;color:#000;letter-spacing:-0.45px;">0</div>
<div class="t" style="left:2726px;top:1203.84px;width:127px;text-align:right;overflow:hidden;font-size:25px;line-height:25px;color:#000;letter-spacing:-0.45px;">183,00 €</div>
<div class="r" style="left:0px;top:1233px;width:2859px;height:2px;background:#dfdfdf;"></div>
<div class="t" style="left:155px;top:1241.84px;width:189px;overflow:hidden;font-size:25px;line-height:25px;color:#000;letter-spacing:-0.45px;">INOBD</div>
<div class="t" style="left:351px;top:1241.84px;width:1163px;overflow:hidden;font-size:25px;line-height:25px;color:#000;letter-spacing:-0.45px;">Servizio Diagnosi e Codifica Per Auto</div>
<div class="t" style="left:1521px;top:1241.84px;width:185px;overflow:hidden;font-size:25px;line-height:25px;color:#000;letter-spacing:-0.45px;">Regolare</div>
<div class="t" style="left:1708px;top:1241.84px;width:177px;text-align:right;overflow:hidden;font-size:25px;line-height:25px;color:#000;letter-spacing:-0.45px;">0</div>
<div class="t" style="left:1892px;top:1241.84px;width:145px;text-align:right;overflow:hidden;font-size:25px;line-height:25px;color:#000;letter-spacing:-0.45px;">0</div>
<div class="t" style="left:2450px;top:1241.84px;width:99px;text-align:right;overflow:hidden;font-size:25px;line-height:25px;color:#000;letter-spacing:-0.45px;">0</div>
<div class="t" style="left:2726px;top:1241.84px;width:127px;text-align:right;overflow:hidden;font-size:25px;line-height:25px;color:#000;letter-spacing:-0.45px;">36,60 €</div>
<div class="r" style="left:0px;top:1271px;width:2859px;height:2px;background:#dfdfdf;"></div>
<div class="t" style="left:155px;top:1279.84px;width:189px;overflow:hidden;font-size:25px;line-height:25px;color:#000;letter-spacing:-0.45px;">INCAR</div>
<div class="t" style="left:351px;top:1279.84px;width:1163px;overflow:hidden;font-size:25px;line-height:25px;color:#000;letter-spacing:-0.45px;">Servizio Installazione Per Auto</div>
<div class="t" style="left:1521px;top:1279.84px;width:185px;overflow:hidden;font-size:25px;line-height:25px;color:#000;letter-spacing:-0.45px;">Regolare</div>
<div class="t" style="left:1708px;top:1279.84px;width:177px;text-align:right;overflow:hidden;font-size:25px;line-height:25px;color:#000;letter-spacing:-0.45px;">0</div>
<div class="t" style="left:1892px;top:1279.84px;width:145px;text-align:right;overflow:hidden;font-size:25px;line-height:25px;color:#000;letter-spacing:-0.45px;">0</div>
<div class="t" style="left:2450px;top:1279.84px;width:99px;text-align:right;overflow:hidden;font-size:25px;line-height:25px;color:#000;letter-spacing:-0.45px;">0</div>
<div class="t" style="left:2726px;top:1279.84px;width:127px;text-align:right;overflow:hidden;font-size:25px;line-height:25px;color:#000;letter-spacing:-0.45px;">61,00 €</div>
<div class="r" style="left:0px;top:1309px;width:2859px;height:2px;background:#dfdfdf;"></div>
<div class="t" style="right:3359px;top:1317.84px;font-size:25px;line-height:25px;color:#000;letter-spacing:-0.45px;">ri e Ricambi</div>
<div class="t" style="left:155px;top:1317.84px;width:189px;overflow:hidden;font-size:25px;line-height:25px;color:#000;letter-spacing:-0.45px;">KR1213</div>
<div class="t" style="left:351px;top:1317.84px;width:1163px;overflow:hidden;font-size:25px;line-height:25px;color:#000;letter-spacing:-0.45px;">Adattatore RCA Femmina Femmina Singolo Audio o Video</div>
<div class="t" style="left:1521px;top:1317.84px;width:185px;overflow:hidden;font-size:25px;line-height:25px;color:#000;letter-spacing:-0.45px;">Regolare</div>
<div class="t" style="left:1708px;top:1317.84px;width:177px;text-align:right;overflow:hidden;font-size:25px;line-height:25px;color:#000;letter-spacing:-0.45px;">0</div>
<div class="t" style="left:1892px;top:1317.84px;width:145px;text-align:right;overflow:hidden;font-size:25px;line-height:25px;color:#000;letter-spacing:-0.45px;">0</div>
<svg style="left:2392px;top:1319px" width="18" height="18"><polygon points="2,6 4.5,6 4.5,8.5 7,11 14,3.5 16,2 16,8 7,16 2,11" fill="#000"/></svg>
<div class="t" style="left:2450px;top:1317.84px;width:99px;text-align:right;overflow:hidden;font-size:25px;line-height:25px;color:#000;letter-spacing:-0.45px;">0</div>
<div class="t" style="left:2561px;top:1317.84px;width:95px;overflow:hidden;font-size:25px;line-height:25px;color:#000;letter-spacing:-0.45px;">RCA F/F</div>
<div class="t" style="left:2658px;top:1317.84px;width:61px;text-align:right;overflow:hidden;font-size:25px;line-height:25px;color:#000;letter-spacing:-0.45px;">30</div>
<div class="t" style="left:2726px;top:1317.84px;width:127px;text-align:right;overflow:hidden;font-size:25px;line-height:25px;color:#000;letter-spacing:-0.45px;">1,50 €</div>
<div class="r" style="left:0px;top:1347px;width:2859px;height:2px;background:#dfdfdf;"></div>
<div class="t" style="right:3359px;top:1355.84px;font-size:25px;line-height:25px;color:#000;letter-spacing:-0.45px;">ri e Ricambi</div>
<div class="t" style="left:155px;top:1355.84px;width:189px;overflow:hidden;font-size:25px;line-height:25px;color:#000;letter-spacing:-0.45px;">KR1212</div>
<div class="t" style="left:351px;top:1355.84px;width:1163px;overflow:hidden;font-size:25px;line-height:25px;color:#000;letter-spacing:-0.45px;">Adattatore RCA Maschio Maschio Singolo Audio o Video</div>
<div class="t" style="left:1521px;top:1355.84px;width:185px;overflow:hidden;font-size:25px;line-height:25px;color:#000;letter-spacing:-0.45px;">Regolare</div>
<div class="t" style="left:1708px;top:1355.84px;width:177px;text-align:right;overflow:hidden;font-size:25px;line-height:25px;color:#000;letter-spacing:-0.45px;">0</div>
<div class="t" style="left:1892px;top:1355.84px;width:145px;text-align:right;overflow:hidden;font-size:25px;line-height:25px;color:#000;letter-spacing:-0.45px;">0</div>
<svg style="left:2392px;top:1357px" width="18" height="18"><polygon points="2,6 4.5,6 4.5,8.5 7,11 14,3.5 16,2 16,8 7,16 2,11" fill="#000"/></svg>
<div class="t" style="left:2450px;top:1355.84px;width:99px;text-align:right;overflow:hidden;font-size:25px;line-height:25px;color:#000;letter-spacing:-0.45px;">0</div>
<div class="t" style="left:2561px;top:1355.84px;width:95px;overflow:hidden;font-size:25px;line-height:25px;color:#000;letter-spacing:-0.45px;">RCA M/M</div>
<div class="t" style="left:2658px;top:1355.84px;width:61px;text-align:right;overflow:hidden;font-size:25px;line-height:25px;color:#000;letter-spacing:-0.45px;">30</div>
<div class="t" style="left:2726px;top:1355.84px;width:127px;text-align:right;overflow:hidden;font-size:25px;line-height:25px;color:#000;letter-spacing:-0.45px;">1,50 €</div>
<div class="r" style="left:0px;top:1385px;width:2859px;height:2px;background:#dfdfdf;"></div>
<div class="t" style="right:3359px;top:1393.84px;font-size:25px;line-height:25px;color:#000;letter-spacing:-0.45px;">ri e Ricambi</div>
<div class="t" style="left:155px;top:1393.84px;width:189px;overflow:hidden;font-size:25px;line-height:25px;color:#000;letter-spacing:-0.45px;">KR2017</div>
<div class="t" style="left:351px;top:1393.84px;width:1163px;overflow:hidden;font-size:25px;line-height:25px;color:#000;letter-spacing:-0.45px;">Auto DVR Telecamera Abitacolo Video Registratore monitor 2,4</div>
<div class="t" style="left:1521px;top:1393.84px;width:185px;overflow:hidden;font-size:25px;line-height:25px;color:#000;letter-spacing:-0.45px;">Regolare</div>
<div class="t" style="left:1708px;top:1393.84px;width:177px;text-align:right;overflow:hidden;font-size:25px;line-height:25px;color:#000;letter-spacing:-0.45px;">10</div>
<div class="t" style="left:1892px;top:1393.84px;width:145px;text-align:right;overflow:hidden;font-size:25px;line-height:25px;color:#000;letter-spacing:-0.45px;">1</div>
<div class="t" style="left:2049px;top:1393.84px;width:305px;overflow:hidden;font-size:25px;line-height:25px;color:#000;letter-spacing:-0.45px;">DALLOX-abi</div>
<svg style="left:2392px;top:1395px" width="18" height="18"><polygon points="2,6 4.5,6 4.5,8.5 7,11 14,3.5 16,2 16,8 7,16 2,11" fill="#000"/></svg>
<div class="t" style="left:2450px;top:1393.84px;width:99px;text-align:right;overflow:hidden;font-size:25px;line-height:25px;color:#000;letter-spacing:-0.45px;">0</div>
<div class="t" style="left:2561px;top:1393.84px;width:95px;overflow:hidden;font-size:25px;line-height:25px;color:#000;letter-spacing:-0.45px;">DTC-DVR</div>
<div class="t" style="left:2658px;top:1393.84px;width:61px;text-align:right;overflow:hidden;font-size:25px;line-height:25px;color:#000;letter-spacing:-0.45px;">230</div>
<div class="t" style="left:2726px;top:1393.84px;width:127px;text-align:right;overflow:hidden;font-size:25px;line-height:25px;color:#000;letter-spacing:-0.45px;">40,26 €</div>
<div class="r" style="left:0px;top:1423px;width:2859px;height:2px;background:#dfdfdf;"></div>
<div class="t" style="right:3359px;top:1431.84px;font-size:25px;line-height:25px;color:#000;letter-spacing:-0.45px;">ri e Ricambi</div>
<div class="t" style="left:155px;top:1431.84px;width:189px;overflow:hidden;font-size:25px;line-height:25px;color:#000;letter-spacing:-0.45px;">AURMP01</div>
<div class="t" style="left:351px;top:1431.84px;width:1163px;overflow:hidden;font-size:25px;line-height:25px;color:#000;letter-spacing:-0.45px;">Autoradio 7 Pollici  Android 7.1 - Navigatore GPS Con Bluetooth DAB Control Del Volante Bluetooth - Mercedes</div>
<div class="t" style="left:1521px;top:1431.84px;width:185px;overflow:hidden;font-size:25px;line-height:25px;color:#000;letter-spacing:-0.45px;">Regolare</div>
<div class="t" style="left:1708px;top:1431.84px;width:177px;text-align:right;overflow:hidden;font-size:25px;line-height:25px;color:#000;letter-spacing:-0.45px;">1</div>
<div class="t" style="left:1892px;top:1431.84px;width:145px;text-align:right;overflow:hidden;font-size:25px;line-height:25px;color:#000;letter-spacing:-0.45px;">1</div>
<div class="t" style="left:2049px;top:1431.84px;width:305px;overflow:hidden;font-size:25px;line-height:25px;color:#000;letter-spacing:-0.45px;">chichao_abi</div>
<svg style="left:2392px;top:1433px" width="18" height="18"><polygon points="2,6 4.5,6 4.5,8.5 7,11 14,3.5 16,2 16,8 7,16 2,11" fill="#000"/></svg>
<div class="t" style="left:2450px;top:1431.84px;width:99px;text-align:right;overflow:hidden;font-size:25px;line-height:25px;color:#000;letter-spacing:-0.45px;">0</div>
<div class="t" style="left:2561px;top:1431.84px;width:95px;overflow:hidden;font-size:25px;line-height:25px;color:#000;letter-spacing:-0.45px;">Mercedes</div>
<div class="t" style="left:2658px;top:1431.84px;width:61px;text-align:right;overflow:hidden;font-size:25px;line-height:25px;color:#000;letter-spacing:-0.45px;">2700</div>
<div class="t" style="left:2726px;top:1431.84px;width:127px;text-align:right;overflow:hidden;font-size:25px;line-height:25px;color:#000;letter-spacing:-0.45px;">732,00 €</div>
<div class="r" style="left:0px;top:1461px;width:2859px;height:2px;background:#dfdfdf;"></div>
<div class="r" style="left:148px;top:205px;width:2px;height:1240px;background:#e0e0e0;"></div>
<div class="r" style="left:148px;top:247px;width:2px;height:36px;background:#cfe3f7;"></div>
<div class="r" style="left:344px;top:205px;width:2px;height:1240px;background:#e0e0e0;"></div>
<div class="r" style="left:344px;top:247px;width:2px;height:36px;background:#cfe3f7;"></div>
<div class="r" style="left:1514px;top:205px;width:2px;height:1240px;background:#e0e0e0;"></div>
<div class="r" style="left:1514px;top:247px;width:2px;height:36px;background:#cfe3f7;"></div>
<div class="r" style="left:1706px;top:205px;width:2px;height:1240px;background:#e0e0e0;"></div>
<div class="r" style="left:1706px;top:247px;width:2px;height:36px;background:#cfe3f7;"></div>
<div class="r" style="left:1890px;top:205px;width:2px;height:1240px;background:#e0e0e0;"></div>
<div class="r" style="left:1890px;top:247px;width:2px;height:36px;background:#cfe3f7;"></div>
<div class="r" style="left:2042px;top:205px;width:2px;height:1240px;background:#e0e0e0;"></div>
<div class="r" style="left:2042px;top:247px;width:2px;height:36px;background:#cfe3f7;"></div>
<div class="r" style="left:2354px;top:205px;width:2px;height:1240px;background:#e0e0e0;"></div>
<div class="r" style="left:2354px;top:247px;width:2px;height:36px;background:#cfe3f7;"></div>
<div class="r" style="left:2448px;top:205px;width:2px;height:1240px;background:#e0e0e0;"></div>
<div class="r" style="left:2448px;top:247px;width:2px;height:36px;background:#cfe3f7;"></div>
<div class="r" style="left:2554px;top:205px;width:2px;height:1240px;background:#e0e0e0;"></div>
<div class="r" style="left:2554px;top:247px;width:2px;height:36px;background:#cfe3f7;"></div>
<div class="r" style="left:2656px;top:205px;width:2px;height:1240px;background:#e0e0e0;"></div>
<div class="r" style="left:2656px;top:247px;width:2px;height:36px;background:#cfe3f7;"></div>
<div class="r" style="left:2724px;top:205px;width:2px;height:1240px;background:#e0e0e0;"></div>
<div class="r" style="left:2724px;top:247px;width:2px;height:36px;background:#cfe3f7;"></div>
<div class="r" style="left:2858px;top:205px;width:1.5px;height:1240px;background:#dcdcdc;"></div>
<div class="r" style="left:0px;top:204.5px;width:2895px;height:2.3px;background:#8a8a8a;"></div>
<div class="r" style="left:0px;top:245.5px;width:2859px;height:1.5px;background:#a9d1f3;"></div>
<div class="r" style="left:0px;top:283px;width:2859px;height:1.2px;background:#bcdcf6;"></div>
<div class="r" style="left:2860px;top:205px;width:34px;height:1240px;background:#f0f0f0;"></div>
<svg style="left:2866px;top:214px" width="22" height="22"><path d="M4,16 L11,8 L18,16" fill="none" stroke="#606060" stroke-width="3.4"/></svg>
<div class="r" style="left:2862px;top:241px;width:30px;height:32px;background:#cdcdcd;"></div>
<div class="r" style="left:2894px;top:205px;width:2px;height:1240px;background:#a0a0a0;"></div>
<div class="r" style="left:2896px;top:205px;width:585px;height:1240px;background:#f0f0f0;"></div>
<div class="r" style="left:2909px;top:258px;width:572px;height:1187px;background:#d9d9d9;"></div>
<div class="r" style="left:2910px;top:259px;width:571px;height:1186px;background:#ffffff;"></div>
<div class="r" style="left:3022px;top:222px;width:163px;height:37px;background:#d9d9d9;"></div>
<div class="r" style="left:3023px;top:223px;width:161px;height:35px;background:#f0f0f0;"></div>
<div class="t " style="left:3031.5px;top:230.90px;font-size:21.5px;line-height:21.5px;color:#000;" >Caratteristiche</div>
<div class="r" style="left:3184px;top:222px;width:137px;height:37px;background:#d9d9d9;"></div>
<div class="r" style="left:3185px;top:223px;width:135px;height:35px;background:#f0f0f0;"></div>
<div class="t " style="left:3197px;top:230.90px;font-size:21.5px;line-height:21.5px;color:#000;" >Dim. e peso</div>
<div class="r" style="left:3320px;top:222px;width:122px;height:37px;background:#d9d9d9;"></div>
<div class="r" style="left:3321px;top:223px;width:120px;height:35px;background:#f0f0f0;"></div>
<div class="t " style="left:3333px;top:230.90px;font-size:21.5px;line-height:21.5px;color:#000;" >Magazzino</div>
<div class="r" style="left:2909px;top:218px;width:114px;height:41px;background:#d9d9d9;"></div>
<div class="r" style="left:2910px;top:219px;width:112px;height:41px;background:#ffffff;"></div>
<div class="t " style="left:2923.5px;top:226.10px;font-size:21.5px;line-height:21.5px;color:#000;" >Prodotto</div>
<div class="t " style="left:2937.5px;top:288.00px;font-size:21.5px;line-height:21.5px;color:#000;" >Cod. prodotto</div>
<div class="t " style="left:2937.5px;top:336.00px;font-size:21.5px;line-height:21.5px;color:#000;" >Descrizione</div>
<div class="t " style="left:2937.5px;top:486.50px;font-size:21.5px;line-height:21.5px;color:#000;" >Tipologia</div>
<div class="t " style="left:2937.5px;top:534.20px;font-size:21.5px;line-height:21.5px;color:#000;" >Categoria</div>
<div class="t " style="left:2937.5px;top:581.90px;font-size:21.5px;line-height:21.5px;color:#000;" >Sottocategoria</div>
<div class="t " style="left:2937.5px;top:629.60px;font-size:21.5px;line-height:21.5px;color:#000;" >U.m.</div>
<div class="t " style="left:2937.5px;top:723.60px;font-size:21.5px;line-height:21.5px;color:#000;" >Listino 1</div>
<div class="t " style="left:2937.5px;top:772.10px;font-size:21.5px;line-height:21.5px;color:#000;" >Listino 2</div>
<div class="t " style="left:2937.5px;top:819.80px;font-size:21.5px;line-height:21.5px;color:#000;" >Listino 3</div>
<div class="t " style="left:2937.5px;top:867.50px;font-size:21.5px;line-height:21.5px;color:#000;" >Listino 4</div>
<div class="t " style="left:2937.5px;top:915.20px;font-size:21.5px;line-height:21.5px;color:#000;" >Listino 5</div>
<div class="t " style="left:2937.5px;top:971.30px;font-size:21.5px;line-height:21.5px;color:#000;" >Immagine</div>
<div class="t " style="left:3038.5px;top:485.30px;font-size:21.5px;line-height:21.5px;color:#2a7fd4;" >(?)</div>
<div class="r" style="left:3096.5px;top:277.5px;width:337.0px;height:40.5px;box-sizing:border-box;border:2px solid #6f6f6f;background:#fff;"></div>
<div class="t " style="left:3101.7px;top:286.20px;font-size:21.5px;line-height:21.5px;color:#000;" >ML5021F</div>
<div class="r" style="left:3440.5px;top:277.5px;width:59.5px;height:40.5px;box-sizing:border-box;border:2px solid #b3b3b3;background:#fff;"></div>
<div class="r" style="left:3448px;top:287px;width:10px;height:12px;background:#d3dbdf;"></div>
<div class="r" style="left:3448px;top:299px;width:10px;height:12px;background:#b3c0c7;"></div>
<svg style="left:3460px;top:287px" width="22" height="24"><polygon points="1.5,11 9,2 9,8 22,8 22,15.5 9,15.5 9,21" fill="#5cb82a"/></svg>
<div class="r" style="left:3096.5px;top:326px;width:403.5px;height:142px;box-sizing:border-box;border:2px solid #6f6f6f;background:#fff;"></div>
<div class="t " style="left:3107px;top:333.72px;font-size:21px;line-height:21px;color:#000;" >24V Bobina Led 5 Metri 300 Smd 3528</div>
<div class="t " style="left:3107px;top:359.62px;font-size:21px;line-height:21px;color:#000;" >Bianco Freddo Tagliabile IP65</div>
<div class="t " style="left:3107px;top:385.52px;font-size:21px;line-height:21px;color:#000;" >Biadesivo Per Camion Barca</div>
<div class="r" style="left:3096.5px;top:476px;width:403.5px;height:40.5px;box-sizing:border-box;border:2px solid #adadad;background:#e5e5e5;"></div>
<div class="t " style="left:3104.4px;top:486.30px;font-size:21.5px;line-height:21.5px;color:#000;" >Art. con magazzino</div>
<svg style="left:3459px;top:488px" width="20" height="14"><path d="M3,3 L10,10 L17,3" fill="none" stroke="#555" stroke-width="1.8"/></svg>
<div class="r" style="left:3096.5px;top:523.5px;width:337.0px;height:41.0px;box-sizing:border-box;border:2px solid #adadad;background:#e5e5e5;"></div>
<div class="t " style="left:3104.4px;top:534.30px;font-size:21.5px;line-height:21.5px;color:#000;" >Articoli Fuori Catalogo</div>
<svg style="left:3406px;top:536px" width="20" height="14"><path d="M3,3 L10,10 L17,3" fill="none" stroke="#555" stroke-width="1.8"/></svg>
<div class="r" style="left:3096.5px;top:571.5px;width:337.0px;height:41.0px;box-sizing:border-box;border:2px solid #adadad;background:#e5e5e5;"></div>
<svg style="left:3406px;top:584px" width="20" height="14"><path d="M3,3 L10,10 L17,3" fill="none" stroke="#555" stroke-width="1.8"/></svg>
<div class="r" style="left:3440.5px;top:523.5px;width:59.5px;height:41.0px;box-sizing:border-box;border:2px solid #b3b3b3;background:#fff;"></div>
<svg style="left:3449px;top:530px" width="34" height="30"><rect x="2" y="2" width="25" height="22" fill="#e8eef5" stroke="#6b7680" stroke-width="1.6"/><path d="M6,8 H23 M6,12.5 H23 M6,17 H18" stroke="#7b8a96" stroke-width="1.5"/><path d="M14,27 L16,21 L29,8 L32,11 L19,24 Z" fill="#f2c12e" stroke="#7a5a10" stroke-width="1"/><path d="M28,9 L31,6 L34,9 L31,12 Z" fill="#d9534f"/></svg>
<div class="r" style="left:3440.5px;top:571.5px;width:59.5px;height:41.0px;box-sizing:border-box;border:2px solid #b3b3b3;background:#fff;"></div>
<svg style="left:3449px;top:578px" width="34" height="30"><rect x="2" y="2" width="25" height="22" fill="#e8eef5" stroke="#6b7680" stroke-width="1.6"/><path d="M6,8 H23 M6,12.5 H23 M6,17 H18" stroke="#7b8a96" stroke-width="1.5"/><path d="M14,27 L16,21 L29,8 L32,11 L19,24 Z" fill="#f2c12e" stroke="#7a5a10" stroke-width="1"/><path d="M28,9 L31,6 L34,9 L31,12 Z" fill="#d9534f"/></svg>
<div class="r" style="left:3096.5px;top:619.5px;width:159.0px;height:41.0px;box-sizing:border-box;border:2px solid #6f6f6f;background:#fff;"></div>
<div class="t " style="left:3101.7px;top:628.40px;font-size:21.5px;line-height:21.5px;color:#000;" >PZ</div>
<svg style="left:3227.7px;top:633px" width="20" height="14"><path d="M3,3 L10,10 L17,3" fill="none" stroke="#555" stroke-width="1.8"/></svg>
<div class="r" style="left:3262px;top:619.5px;width:47px;height:41.0px;box-sizing:border-box;border:2px solid #b3b3b3;background:#fff;"></div>
<svg style="left:3270px;top:626px" width="34" height="30"><rect x="2" y="2" width="25" height="22" fill="#e8eef5" stroke="#6b7680" stroke-width="1.6"/><path d="M6,8 H23 M6,12.5 H23 M6,17 H18" stroke="#7b8a96" stroke-width="1.5"/><path d="M14,27 L16,21 L29,8 L32,11 L19,24 Z" fill="#f2c12e" stroke="#7a5a10" stroke-width="1"/><path d="M28,9 L31,6 L34,9 L31,12 Z" fill="#d9534f"/></svg>
<div class="t " style="left:2937px;top:680.80px;font-size:21.5px;line-height:21.5px;color:#000;font-weight:bold;letter-spacing:0.9px;" >Prezzi</div>
<div class="t " style="left:3013.5px;top:680.80px;font-size:21.5px;line-height:21.5px;color:#1e73d2;font-weight:bold;letter-spacing:2px;" >Ivati</div>
<svg style="left:3074px;top:687px" width="16" height="10"><polygon points="1,1 15,1 8,8" fill="#1e73d2"/></svg>
<svg style="left:3460px;top:683px" width="20" height="18"><path d="M3,2 L16,15 M16,2 L3,15" stroke="#000" stroke-width="3"/></svg>
<div class="r" style="left:3096.5px;top:714.0px;width:159.0px;height:40.5px;box-sizing:border-box;border:2px solid #6f6f6f;background:#fff;"></div>
<div class="t" style="right:233px;top:722.40px;font-size:21.5px;line-height:21.5px;">24,40 €</div>
<div class="r" style="left:3262px;top:714.0px;width:49px;height:40.5px;box-sizing:border-box;border:2px solid #b3b3b3;background:#fff;"></div>
<svg style="left:3276px;top:729.0px" width="20" height="12"><polygon points="1,1 19,1 10,10" fill="#000"/></svg>
<div class="r" style="left:3096.5px;top:761.9px;width:159.0px;height:40.5px;box-sizing:border-box;border:2px solid #6f6f6f;background:#fff;"></div>
<div class="t" style="right:233px;top:770.30px;font-size:21.5px;line-height:21.5px;">19,28 €</div>
<div class="r" style="left:3262px;top:761.9px;width:49px;height:40.5px;box-sizing:border-box;border:2px solid #b3b3b3;background:#fff;"></div>
<svg style="left:3276px;top:776.9px" width="20" height="12"><polygon points="1,1 19,1 10,10" fill="#000"/></svg>
<div class="r" style="left:3096.5px;top:809.8px;width:159.0px;height:40.5px;box-sizing:border-box;border:2px solid #6f6f6f;background:#fff;"></div>
<div class="t" style="right:233px;top:818.20px;font-size:21.5px;line-height:21.5px;">15,37 €</div>
<div class="r" style="left:3262px;top:809.8px;width:49px;height:40.5px;box-sizing:border-box;border:2px solid #b3b3b3;background:#fff;"></div>
<svg style="left:3276px;top:824.8px" width="20" height="12"><polygon points="1,1 19,1 10,10" fill="#000"/></svg>
<div class="r" style="left:3096.5px;top:857.7px;width:159.0px;height:40.5px;box-sizing:border-box;border:2px solid #6f6f6f;background:#f0f0f0;"></div>
<div class="t" style="right:233px;top:866.10px;font-size:21.5px;line-height:21.5px;">19,28 €</div>
<div class="r" style="left:3262px;top:857.7px;width:49px;height:40.5px;box-sizing:border-box;border:2px solid #b3b3b3;background:#fff;"></div>
<svg style="left:3276px;top:872.7px" width="20" height="12"><polygon points="1,1 19,1 10,10" fill="#000"/></svg>
<div class="r" style="left:3096.5px;top:905.6px;width:159.0px;height:40.5px;box-sizing:border-box;border:2px solid #6f6f6f;background:#f0f0f0;"></div>
<div class="t" style="right:233px;top:914.00px;font-size:21.5px;line-height:21.5px;">15,37 €</div>
<div class="r" style="left:3262px;top:905.6px;width:49px;height:40.5px;box-sizing:border-box;border:2px solid #b3b3b3;background:#fff;"></div>
<svg style="left:3276px;top:920.6px" width="20" height="12"><polygon points="1,1 19,1 10,10" fill="#000"/></svg>
<div class="r" style="left:3096.5px;top:962px;width:403.5px;height:184px;box-sizing:border-box;border:2px solid #6f6f6f;background:#fff;"></div>
<div class="r" style="left:3172px;top:965px;width:240px;height:178px;background:#f8f8f8;"></div>
<div class="t " style="left:2937px;top:1155.80px;font-size:21.5px;line-height:21.5px;color:#000;" >Note</div>
<div class="r" style="left:2924px;top:1187.5px;width:576px;height:312.5px;box-sizing:border-box;border:1.5px solid #6f6f6f;background:#fff;"></div>
<div class="r" style="left:3451px;top:1190px;width:30px;height:255px;background:#f0f0f0;"></div>
<svg style="left:3455px;top:1200px" width="22" height="16"><path d="M4,12 L11,5 L18,12" fill="none" stroke="#c8c8c8" stroke-width="2.6"/></svg>
<div class="t " style="left:2936px;top:1195.92px;font-size:21px;line-height:21px;color:#000;" >24V Bobina Led 5 Metri 300 Smd 3528 Bianco Freddo</div>
<div class="t " style="left:2936px;top:1221.82px;font-size:21px;line-height:21px;color:#000;" >Tagliabile IP65 Biadesivo Per Camion Barca</div>
<div class="r" style="left:1024px;top:589px;width:1158px;height:813px;box-shadow:0 4px 18px rgba(0,0,0,0.28);"></div>
<div class="r" style="left:1024px;top:589px;width:1158px;height:813px;background:#b8956c;"></div>
<div class="r" style="left:1026px;top:591px;width:1154px;height:809px;background:#ffffff;"></div>
<svg style="left:1042px;top:604px" width="33" height="32"><path d="M3,0 H32 V28 Q32,31.5 28.5,31.5 H0 V3 Q0,0 3,0 Z" fill="#52b2da"/><path d="M16,6.5 H7 V23 H16 M7,14.5 H15" fill="none" stroke="#eaf8ff" stroke-width="2.6"/><path d="M23.2,8 V18 M18.5,13 H28 M18.5,21 H28" fill="none" stroke="#eaf8ff" stroke-width="2.4"/></svg>
<div class="t " style="left:1079.6px;top:609.68px;font-size:24px;line-height:24px;color:#000;" >Categorie prodotti</div>
<div class="r" style="left:1939px;top:618px;width:20px;height:2px;background:#c8c8c8;"></div>
<svg style="left:2028px;top:607px" width="24" height="24"><rect x="3" y="3" width="18" height="18" fill="none" stroke="#000" stroke-width="2"/></svg>
<svg style="left:2121px;top:607px" width="24" height="24"><path d="M3,3 L21,21 M21,3 L3,21" stroke="#000" stroke-width="2" fill="none"/></svg>
<div class="r" style="left:1026px;top:651px;width:1153px;height:684px;background:#828790;"></div>
<div class="r" style="left:1027px;top:652px;width:1151px;height:683px;background:#ffffff;"></div>
<div class="r" style="left:1027px;top:652px;width:1115px;height:38px;background:#0078d7;"></div>
<div class="r" style="left:1028px;top:653px;width:1111px;height:34px;border:1.5px dotted #d8b48a;"></div>
<div class="t " style="left:1031.4px;top:660.68px;font-size:24px;line-height:24px;color:#fff;font-weight:bold;letter-spacing:0.65px;" >Articoli Fuori Catalogo</div>
<div class="r" style="left:1027px;top:726px;width:1115px;height:2px;background:#dfdfdf;"></div>
<div class="t " style="left:1031.2px;top:698.18px;font-size:24px;line-height:24px;color:#000;font-weight:bold;letter-spacing:2.05px;" >Auto e Moto</div>
<div class="r" style="left:1027px;top:764px;width:1115px;height:2px;background:#dfdfdf;"></div>
<div class="t " style="left:1240px;top:734.84px;font-size:25px;line-height:25px;color:#000;letter-spacing:-0.6px;" >Accessori e Ricambi</div>
<div class="r" style="left:1027px;top:802px;width:1115px;height:2px;background:#dfdfdf;"></div>
<div class="t " style="left:1240px;top:772.84px;font-size:25px;line-height:25px;color:#000;letter-spacing:-0.6px;" >Luci e Lampadine</div>
<div class="r" style="left:1027px;top:840px;width:1115px;height:2px;background:#dfdfdf;"></div>
<div class="t " style="left:1240px;top:810.84px;font-size:25px;line-height:25px;color:#000;letter-spacing:-0.6px;" >Mondo Moto</div>
<div class="r" style="left:1027px;top:878px;width:1115px;height:2px;background:#dfdfdf;"></div>
<div class="t " style="left:1240px;top:848.84px;font-size:25px;line-height:25px;color:#000;letter-spacing:-0.6px;" >Oli Fluidi e Lubrificanti</div>
<div class="r" style="left:1027px;top:916px;width:1115px;height:2px;background:#dfdfdf;"></div>
<div class="t " style="left:1240px;top:886.84px;font-size:25px;line-height:25px;color:#000;letter-spacing:-0.6px;" >Truck 24V</div>
<div class="r" style="left:1027px;top:954px;width:1115px;height:2px;background:#dfdfdf;"></div>
<div class="t " style="left:1031.2px;top:926.18px;font-size:24px;line-height:24px;color:#000;font-weight:bold;letter-spacing:0.4px;" >Casa e Giardino</div>
<div class="r" style="left:1027px;top:992px;width:1115px;height:2px;background:#dfdfdf;"></div>
<div class="t " style="left:1240px;top:962.84px;font-size:25px;line-height:25px;color:#000;letter-spacing:-0.6px;" >Accessori e Ricambi Luci</div>
<div class="r" style="left:1027px;top:1030px;width:1115px;height:2px;background:#dfdfdf;"></div>
<div class="t " style="left:1240px;top:1000.84px;font-size:25px;line-height:25px;color:#000;letter-spacing:-0.6px;" >DJ Lighting</div>
<div class="r" style="left:1027px;top:1068px;width:1115px;height:2px;background:#dfdfdf;"></div>
<div class="t " style="left:1240px;top:1038.84px;font-size:25px;line-height:25px;color:#000;letter-spacing:-0.6px;" >Illuminazione Led</div>
<div class="r" style="left:1027px;top:1106px;width:1115px;height:2px;background:#dfdfdf;"></div>
<div class="t " style="left:1240px;top:1076.84px;font-size:25px;line-height:25px;color:#000;letter-spacing:-0.6px;" >Smart Home &amp; Design</div>
<div class="r" style="left:1027px;top:1144px;width:1115px;height:2px;background:#dfdfdf;"></div>
<div class="t " style="left:1031.2px;top:1116.18px;font-size:24px;line-height:24px;color:#000;font-weight:bold;letter-spacing:0.8px;" >Elettronica</div>
<div class="r" style="left:1027px;top:1182px;width:1115px;height:2px;background:#dfdfdf;"></div>
<div class="t " style="left:1240px;top:1152.84px;font-size:25px;line-height:25px;color:#000;letter-spacing:-0.6px;" >Antifurto e Sorveglianza</div>
<div class="r" style="left:1027px;top:1220px;width:1115px;height:2px;background:#dfdfdf;"></div>
<div class="t " style="left:1240px;top:1190.84px;font-size:25px;line-height:25px;color:#000;letter-spacing:-0.6px;" >Fotografia e Video</div>
<div class="r" style="left:1027px;top:1258px;width:1115px;height:2px;background:#dfdfdf;"></div>
<div class="t " style="left:1240px;top:1228.84px;font-size:25px;line-height:25px;color:#000;letter-spacing:-0.6px;" >Informatica</div>
<div class="r" style="left:1027px;top:1296px;width:1115px;height:2px;background:#dfdfdf;"></div>
<div class="t " style="left:1240px;top:1266.84px;font-size:25px;line-height:25px;color:#000;letter-spacing:-0.6px;" >Telefonia e Mobile</div>
<div class="r" style="left:1027px;top:1334px;width:1115px;height:2px;background:#dfdfdf;"></div>
<div class="t " style="left:1031.2px;top:1306.18px;font-size:24px;line-height:24px;color:#000;font-weight:bold;letter-spacing:1.7px;" >In Offerta</div>
<div class="r" style="left:2142px;top:652px;width:36px;height:683px;background:#f0f0f0;"></div>
<svg style="left:2150px;top:662px" width="22" height="16"><path d="M4,12 L11,5 L18,12" fill="none" stroke="#606060" stroke-width="2.8"/></svg>
<div class="r" style="left:2146px;top:687px;width:30px;height:347px;background:#cdcdcd;"></div>
<svg style="left:2150px;top:1310px" width="22" height="16"><path d="M4,4 L11,11 L18,4" fill="none" stroke="#606060" stroke-width="2.8"/></svg>
<div class="r" style="left:1026px;top:1335px;width:1154px;height:65px;background:#f0f0f0;"></div>
<div class="r" style="left:1026px;top:1334px;width:1154px;height:1.5px;background:#a0a0a0;"></div>
<div class="r" style="left:1208px;top:1336px;width:1.5px;height:64px;background:#a0a0a0;"></div>
<div class="r" style="left:1214px;top:1336px;width:168px;height:64px;background:#91c9f7;"></div>
<div class="t " style="left:1096px;top:1358.08px;font-size:24px;line-height:24px;color:#000;font-weight:bold;letter-spacing:0.4px;text-underline-offset:3px;" ><u>A</u>pplica</div>
<div class="t " style="left:1293px;top:1358.08px;font-size:24px;line-height:24px;color:#000;" >Nuova</div>
<div class="t " style="left:1452.6px;top:1358.08px;font-size:24px;line-height:24px;color:#000;text-underline-offset:3px;" ><u>M</u>odifica</div>
<div class="t " style="left:1633px;top:1358.08px;font-size:24px;line-height:24px;color:#000;" >Elimina</div>
<div class="t " style="left:1807px;top:1358.08px;font-size:24px;line-height:24px;color:#000;" >Excel</div>
<div class="t " style="left:2098px;top:1358.08px;font-size:24px;line-height:24px;color:#000;" >Chiudi</div>
<div class="r" style="left:1257px;top:1382px;width:273px;height:39px;background:rgba(252,250,240,0.78);border:1px solid rgba(120,120,120,0.3);box-shadow:8px 4px 4px -2px rgba(0,0,0,0.28);"></div>
<div class="t " style="left:1263px;top:1391.03px;font-size:23px;line-height:23px;color:rgba(110,110,110,0.55);" >Inserisci nuova voce  (F9)</div>
<svg style="left:1030px;top:1340px" width="1100" height="60" viewBox="1030 1340 1100 60">
<defs><radialGradient id="orb" cx="0.5" cy="0.45" r="0.55"><stop offset="0" stop-color="#fff59a"/><stop offset="0.45" stop-color="#ffc21c"/><stop offset="1" stop-color="#f08a10"/></radialGradient></defs>
<!-- Applica -->
<rect x="1048" y="1357" width="32" height="26" fill="#29b6f6"/><path d="M1048,1383 L1080,1357 L1080,1383 Z" fill="#039be5"/>
<circle cx="1076" cy="1381" r="12" fill="#5cb82e"/>
<path d="M1070,1381 L1075,1386 L1083,1376" fill="none" stroke="#fff" stroke-width="3.2"/>
<!-- Nuova -->
<rect x="1244" y="1357" width="32" height="26" fill="#29b6f6"/><path d="M1244,1383 L1276,1357 L1276,1383 Z" fill="#039be5"/>
<circle cx="1248" cy="1356.5" r="11.5" fill="url(#orb)"/>
<!-- Modifica -->
<rect x="1404" y="1357" width="32" height="26" fill="#29b6f6"/><path d="M1404,1383 L1436,1357 L1436,1383 Z" fill="#039be5"/>
<path d="M1421,1392 L1423,1385 L1438.5,1369.5 L1443,1374 L1427.5,1389.5 Z" fill="#f4cf3a" stroke="#b08a18" stroke-width="0.8"/>
<path d="M1438.5,1369.5 L1441,1367 L1445.5,1371.5 L1443,1374 Z" fill="#d9482b"/>
<!-- Elimina -->
<rect x="1584" y="1357" width="32" height="26" fill="#29b6f6"/><path d="M1584,1383 L1616,1357 L1616,1383 Z" fill="#039be5"/>
<path d="M1579,1348 L1597,1366 M1597,1348 L1579,1366" stroke="#d9431e" stroke-width="6" stroke-linecap="square"/>
<!-- Excel -->
<rect x="1776" y="1351" width="20" height="36" fill="#1f7244"/>
<g fill="#fff"><rect x="1778" y="1355" width="4" height="4"/><rect x="1784" y="1355" width="9" height="4"/><rect x="1778" y="1362" width="4" height="4"/><rect x="1784" y="1362" width="9" height="4"/>
<rect x="1778" y="1369" width="4" height="4"/><rect x="1784" y="1369" width="9" height="4"/><rect x="1778" y="1376" width="4" height="4"/><rect x="1784" y="1376" width="9" height="4"/></g>
<path d="M1748,1349 L1776,1345 L1776,1393 L1748,1388 Z" fill="#217346"/>
<path d="M1755,1356 L1759,1356 L1762,1362 L1765,1356 L1769,1356 L1764.5,1369 L1769.5,1382 L1765.5,1382 L1762,1375 L1758.5,1382 L1754.5,1382 L1759.5,1369 Z" fill="#fff"/>
<!-- Help -->
<circle cx="1990" cy="1369" r="23.5" fill="#1a74c1"/>
<path d="M2006.6,1352.4 A23.5,23.5 0 0 1 1973.4,1385.6 Z" fill="#0e5fa8"/>
<path d="M1981.5,1361 C1981.5,1354 1986,1350.5 1991,1350.5 C1997,1350.5 2000.5,1354.5 2000.5,1359 C2000.5,1364 1997,1365.5 1994.5,1368 C1993,1369.5 1993,1371 1993,1373 L1987.5,1373 C1987.5,1369 1988.5,1367 1991,1364.5 C1993.5,1362 1995,1361 1995,1359 C1995,1356.5 1993,1355.5 1991,1355.5 C1988.5,1355.5 1987,1357.5 1987,1361 Z" fill="#fff"/>
<circle cx="1990.2" cy="1380" r="3.6" fill="#fff"/>
<!-- Chiudi -->
<path d="M2050,1353 L2082,1385 M2082,1353 L2050,1385" stroke="#2b87e3" stroke-width="8" stroke-linecap="square"/>
<path d="M2050,1353 L2066,1369 M2082,1353 L2066,1369" stroke="#4aa3f0" stroke-width="3"/>
</svg>
<svg style="left:3172px;top:965px;filter:blur(1px)" width="240" height="178" viewBox="0 0 240 178">
<ellipse cx="114" cy="103" rx="98" ry="35" fill="#e6e6e6"/>
<ellipse cx="114" cy="80" rx="101" ry="37" fill="#f1f1f1"/>
<ellipse cx="114" cy="68" rx="78" ry="24" fill="#dededa"/>
<ellipse cx="114" cy="84" rx="88" ry="22" fill="#c8c8c4"/>
<ellipse cx="115" cy="64" rx="36" ry="17" fill="#f3f3f3"/>
<rect x="99" y="43" width="19" height="66" fill="#f0f0f0"/>
<g fill="#8a8a8a"><rect x="76" y="113" width="3" height="3"/><rect x="112" y="116" width="3" height="3"/><rect x="150" y="111" width="3" height="3"/><rect x="38" y="88" width="3" height="3"/><rect x="178" y="84" width="3" height="3"/><rect x="160" y="92" width="3" height="3"/><rect x="55" y="95" width="3" height="3"/></g>
<path d="M55,94 L65,97" stroke="#e0708a" stroke-width="2"/>
<path d="M186,107 L204,100 L214,126 L198,133 Z" fill="#e0e0e0"/>
<path d="M202,98 L212,92 L222,99 L210,103 Z" fill="#b9c936"/>
<circle cx="193" cy="167" r="6" fill="#dff2f7"/>
<rect x="208" y="161" width="26" height="12" fill="#8f8f8f"/>
<rect x="211" y="164" width="20" height="6" fill="#b5b5b5"/>
</svg>
<svg style="left:0;top:0" width="3481" height="1445" viewBox="0 0 3481 1445"><polygon points="232.1,394.3 200.5,160.4 205.0,159.7 194.3,144.1 188.6,162.1 193.1,161.5 231.1,394.5" fill="#f03a3a"/><polygon points="3027.8,369.7 3432.4,520.9 3430.4,526.5 3452.4,524.5 3436.9,508.7 3434.8,514.3 3028.2,368.7" fill="#f03a3a"/><polygon points="1695.1,995.2 1333.8,1319.3 1329.6,1314.7 1320.4,1335.8 1342.3,1328.7 1338.1,1324.1 1695.7,996.0" fill="#f03a3a"/></svg>
</body></html>
